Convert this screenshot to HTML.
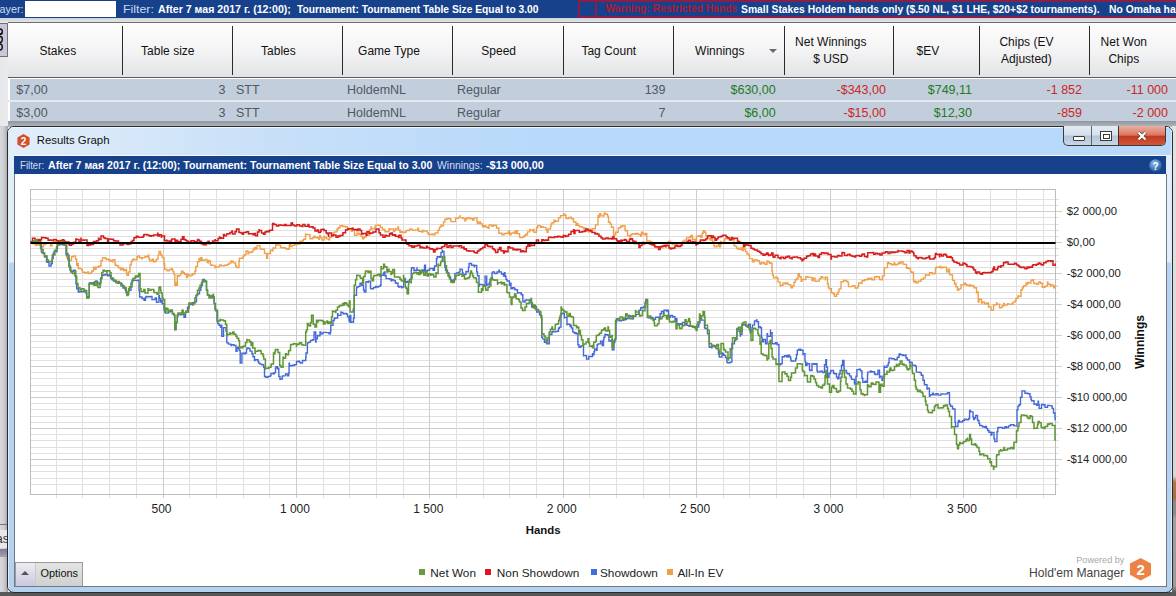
<!DOCTYPE html>
<html><head><meta charset="utf-8">
<style>
*{margin:0;padding:0;box-sizing:border-box}
html,body{width:1176px;height:596px;overflow:hidden;background:#e8eaed;font-family:"Liberation Sans",sans-serif;position:relative}
.a{position:absolute;white-space:nowrap}
.t{line-height:1}
.sep{top:26px;width:2px;height:49px;background:#2a2a2a}
</style></head><body>
<div class="a" style="left:0;top:0;width:1176px;height:17.5px;background:#17428b"></div>
<div class="a" style="left:25px;top:1px;width:91px;height:15.5px;background:#fff"></div>
<div class="a t " style="left:-0.50px;top:3.61px;font-size:10.8px;color:#d0dcf0;">ayer:</div>
<div class="a t " style="left:122.80px;top:3.69px;font-size:10.7px;color:#c8d8f0;transform:scaleX(1.1565);transform-origin:0 0;">Filter:</div>
<div class="a t " style="left:158.30px;top:3.69px;font-size:10.7px;color:#fff;font-weight:bold;transform:scaleX(0.9932);transform-origin:0 0;">After 7 мая 2017 г. (12:00);</div>
<div class="a t " style="left:296.80px;top:3.69px;font-size:10.7px;color:#fff;font-weight:bold;transform:scaleX(0.9592);transform-origin:0 0;">Tournament: Tournament Table Size Equal to 3.00</div>
<div class="a" style="left:578px;top:0;width:600px;height:18px;border:2px solid #8a1e4a"></div>
<div class="a" style="left:578px;top:0;width:18.5px;height:18px;border:2px solid #8a1e4a"></div>
<div class="a t " style="left:605.50px;top:4.48px;font-size:10.3px;color:#b01a32;font-weight:bold;">Warning: Restricted Hands</div>
<div class="a t " style="left:741.00px;top:3.69px;font-size:10.7px;color:#fff;font-weight:bold;transform:scaleX(0.9681);transform-origin:0 0;">Small Stakes Holdem hands only ($.50 NL, $1 LHE, $20+$2 tournaments).</div>
<div class="a t " style="left:1108.50px;top:3.69px;font-size:10.7px;color:#fff;font-weight:bold;transform:scaleX(0.968);transform-origin:0 0;">No Omaha hands</div>
<div class="a" style="left:0;top:17.5px;width:1176px;height:5px;background:linear-gradient(#cfd3d9,#e6e8eb)"></div>
<div class="a" style="left:0;top:22px;width:8px;height:104px;background:linear-gradient(90deg,#e6e8eb,#e9ebee)"></div>
<div class="a" style="left:0;top:126px;width:8px;height:470px;background:linear-gradient(90deg,#d6d8da 0,#cdcdd0 4px,#a29ea8 8px)"></div>
<div class="a" style="left:0;top:524px;width:8px;height:1px;background:#777"></div>
<div class="a" style="left:0;top:549px;width:8px;height:8px;background:linear-gradient(#7d7a90,#a4a2b8)"></div>
<div class="a" style="left:0;top:530px;width:8px;height:18px;background:#e8e8ea"></div>
<div class="a t" style="left:-4px;top:533px;font-size:12px;color:#333">as</div>
<div class="a" style="left:0;top:23px;width:8px;height:34px;background:#c8c6d8;border:1px solid #707078;border-left:none"></div>
<svg class="a" style="left:0;top:22px" width="8" height="36" viewBox="0 0 8 36"><path d="M0,7 Q2.3,7 2.3,9.5 Q2.3,12 0,12 M0,12.5 Q2.3,12.5 2.3,10 M0,14.5 Q2.3,14.5 2.3,17 Q2.3,20.5 0,20.5 M0,22 Q2.3,22 2.3,25 Q2.3,28 0,28" fill="none" stroke="#111" stroke-width="1.4"/></svg>
<div class="a" style="left:8px;top:22px;width:1168px;height:56px;border-top:1px solid #6f6f6f;border-bottom:1px solid #5a5a5a;background:linear-gradient(#fdfdfd 0%,#f4f4f5 50%,#e2e3e6 100%)"></div>
<div class="a sep" style="left:121.5px;width:1.5px"></div>
<div class="a sep" style="left:231.5px;width:1.5px"></div>
<div class="a sep" style="left:341.5px;width:1.5px"></div>
<div class="a sep" style="left:451.5px;width:1.5px"></div>
<div class="a sep" style="left:562.5px;width:1.5px"></div>
<div class="a sep" style="left:672.5px;width:1.5px"></div>
<div class="a sep" style="left:783.5px;width:1.5px"></div>
<div class="a sep" style="left:892.5px;width:1.5px"></div>
<div class="a sep" style="left:978.5px;width:1.5px"></div>
<div class="a sep" style="left:1088.5px;width:1.5px"></div>
<div class="a t " style="left:2.80px;width:110px;text-align:center;top:44.74px;font-size:12px;color:#111;">Stakes</div>
<div class="a t " style="left:112.80px;width:110px;text-align:center;top:44.74px;font-size:12px;color:#111;">Table size</div>
<div class="a t " style="left:223.40px;width:110px;text-align:center;top:44.74px;font-size:12px;color:#111;">Tables</div>
<div class="a t " style="left:334.00px;width:110px;text-align:center;top:44.74px;font-size:12px;color:#111;">Game Type</div>
<div class="a t " style="left:443.70px;width:110px;text-align:center;top:44.74px;font-size:12px;color:#111;">Speed</div>
<div class="a t " style="left:553.80px;width:110px;text-align:center;top:44.74px;font-size:12px;color:#111;">Tag Count</div>
<div class="a t " style="left:664.80px;width:110px;text-align:center;top:44.74px;font-size:12px;color:#111;">Winnings</div>
<div class="a t " style="left:872.90px;width:110px;text-align:center;top:44.74px;font-size:12px;color:#111;">$EV</div>
<div class="a t " style="left:775.80px;width:110px;text-align:center;top:35.54px;font-size:12px;color:#111;">Net Winnings</div>
<div class="a t " style="left:775.80px;width:110px;text-align:center;top:52.54px;font-size:12px;color:#111;">$ USD</div>
<div class="a t " style="left:971.40px;width:110px;text-align:center;top:35.54px;font-size:12px;color:#111;">Chips (EV</div>
<div class="a t " style="left:971.40px;width:110px;text-align:center;top:52.54px;font-size:12px;color:#111;">Adjusted)</div>
<div class="a t " style="left:1068.80px;width:110px;text-align:center;top:35.54px;font-size:12px;color:#111;">Net Won</div>
<div class="a t " style="left:1068.80px;width:110px;text-align:center;top:52.54px;font-size:12px;color:#111;">Chips</div>
<div class="a" style="left:769px;top:48.5px;width:0;height:0;border-left:4px solid transparent;border-right:4px solid transparent;border-top:4px solid #6a6a6a"></div>
<div class="a" style="left:8px;top:78px;width:1168px;height:44px;background:#fff"></div>
<div class="a" style="left:10px;top:78.5px;width:1166px;height:21px;background:#c2cedb"></div>
<div class="a" style="left:10px;top:101.5px;width:1166px;height:20px;background:#c2cedb"></div>
<div class="a" style="left:8px;top:99.5px;width:1168px;height:2px;background:#e4e9ee"></div>
<div class="a" style="left:8px;top:121px;width:1168px;height:5.5px;background:linear-gradient(#8f969e,#b4b9bf)"></div>
<div class="a t " style="left:16.30px;top:84.02px;font-size:12.5px;color:#4f5863;">$7,00</div>
<div class="a t " style="left:125.50px;width:100px;text-align:right;top:84.02px;font-size:12.5px;color:#4f5863;">3</div>
<div class="a t " style="left:236.00px;top:84.02px;font-size:12.5px;color:#4f5863;">STT</div>
<div class="a t " style="left:347.00px;top:84.02px;font-size:12.5px;color:#4f5863;">HoldemNL</div>
<div class="a t " style="left:457.00px;top:84.02px;font-size:12.5px;color:#4f5863;">Regular</div>
<div class="a t " style="left:565.50px;width:100px;text-align:right;top:84.02px;font-size:12.5px;color:#4f5863;">139</div>
<div class="a t " style="left:675.70px;width:100px;text-align:right;top:84.02px;font-size:12.5px;color:#227a22;">$630,00</div>
<div class="a t " style="left:785.90px;width:100px;text-align:right;top:84.02px;font-size:12.5px;color:#cc2626;">-$343,00</div>
<div class="a t " style="left:872.00px;width:100px;text-align:right;top:84.02px;font-size:12.5px;color:#227a22;">$749,11</div>
<div class="a t " style="left:982.00px;width:100px;text-align:right;top:84.02px;font-size:12.5px;color:#cc2626;">-1 852</div>
<div class="a t " style="left:1068.00px;width:100px;text-align:right;top:84.02px;font-size:12.5px;color:#cc2626;">-11 000</div>
<div class="a t " style="left:16.30px;top:106.72px;font-size:12.5px;color:#4f5863;">$3,00</div>
<div class="a t " style="left:125.50px;width:100px;text-align:right;top:106.72px;font-size:12.5px;color:#4f5863;">3</div>
<div class="a t " style="left:236.00px;top:106.72px;font-size:12.5px;color:#4f5863;">STT</div>
<div class="a t " style="left:347.00px;top:106.72px;font-size:12.5px;color:#4f5863;">HoldemNL</div>
<div class="a t " style="left:457.00px;top:106.72px;font-size:12.5px;color:#4f5863;">Regular</div>
<div class="a t " style="left:565.50px;width:100px;text-align:right;top:106.72px;font-size:12.5px;color:#4f5863;">7</div>
<div class="a t " style="left:675.70px;width:100px;text-align:right;top:106.72px;font-size:12.5px;color:#227a22;">$6,00</div>
<div class="a t " style="left:785.90px;width:100px;text-align:right;top:106.72px;font-size:12.5px;color:#cc2626;">-$15,00</div>
<div class="a t " style="left:872.00px;width:100px;text-align:right;top:106.72px;font-size:12.5px;color:#227a22;">$12,30</div>
<div class="a t " style="left:982.00px;width:100px;text-align:right;top:106.72px;font-size:12.5px;color:#cc2626;">-859</div>
<div class="a t " style="left:1068.00px;width:100px;text-align:right;top:106.72px;font-size:12.5px;color:#cc2626;">-2 000</div>
<div class="a" style="left:1172px;top:126px;width:4px;height:470px;background:linear-gradient(#e2e3e5 0px,#d6d7d9 350px,#b07848 356px,#a87040 372px,#8a8a8a 376px,#8a8a8a 388px,#a0a0a0 392px,#9a9a9a 460px,#5a5a5a 466px)"></div>
<div class="a" style="left:0;top:592px;width:1176px;height:4px;background:#585858"></div>
<div class="a" style="left:7px;top:126px;width:1166px;height:467px;border:1px solid #2b2b2b;border-radius:7px 7px 7px 7px;background:linear-gradient(#e4eef9 0,#e4eef9 135px,#b6d4f1 136px,#b4d2f0 100%);overflow:hidden"><div class="a" style="left:0;top:0;width:1164px;height:28px;background:linear-gradient(90deg,#e2eefa 0px,#c9e0f8 250px,#b8d9fa 520px,#b8d9fa 1164px)"></div><div class="a" style="left:0;top:0;width:1164px;height:1px;background:#f2f8ff"></div><div class="a" style="left:0;top:0;width:1px;height:466px;background:#d8ecfa"></div><div class="a" style="right:0;top:0;width:1px;height:466px;background:#d8ecfa"></div></div>
<svg class="a" style="left:16.5px;top:134px" width="13" height="14" viewBox="0 0 13 14"><polygon points="6.5,0 12.6,3.5 12.6,10.5 6.5,14 0.4,10.5 0.4,3.5" fill="#d4502a"/><text x="6.5" y="11" text-anchor="middle" font-family="Liberation Sans" font-weight="bold" font-size="10" fill="#fff">2</text></svg>
<div class="a t " style="left:36.70px;top:135.15px;font-size:11.4px;color:#111;">Results Graph</div>
<div class="a" style="left:1063px;top:126px;width:103px;height:20px;border:1px solid #3a3a3a;border-top:none;border-radius:0 0 5px 5px;overflow:hidden;background:linear-gradient(#e4ebf3 0%,#d6e0ec 48%,#b5c5d8 52%,#c8d6e6 100%)">
  <div class="a" style="left:27px;top:0;width:1px;height:20px;background:#5c6470"></div>
  <div class="a" style="left:54px;top:0;width:48px;height:20px;border-left:1px solid #4a2a2a;background:linear-gradient(#e9b0a2 0%,#dc7660 45%,#c23a20 52%,#d4583e 100%)"></div>
  <div class="a" style="left:9px;top:10px;width:12px;height:5px;border:1px solid #3a3a3a;background:#fff;border-radius:1px"></div>
  <div class="a" style="left:36px;top:5px;width:12px;height:10px;border:1px solid #3a3a3a;background:#fff"></div>
  <div class="a" style="left:38.5px;top:7.5px;width:7px;height:5px;border:1px solid #3a3a3a;background:#fff"></div>
</div>
<svg class="a" style="left:1135px;top:130px" width="14" height="12" viewBox="0 0 14 12"><path d="M3.5,2.5 L10.5,9.5 M10.5,2.5 L3.5,9.5" stroke="#5a3a3a" stroke-width="3.6" stroke-linecap="butt"/><path d="M3.5,2.5 L10.5,9.5 M10.5,2.5 L3.5,9.5" stroke="#fff" stroke-width="2.2" stroke-linecap="butt"/></svg>
<div class="a" style="left:14px;top:154.5px;width:1152px;height:1px;background:#f4f9ff"></div>
<div class="a" style="left:14px;top:155.5px;width:1152px;height:18px;background:#17428b"></div>
<div class="a t " style="left:19.60px;top:159.83px;font-size:10.6px;color:#d2def2;transform:scaleX(0.9100);transform-origin:0 0;">Filter:</div>
<div class="a t " style="left:48.40px;top:159.83px;font-size:10.6px;color:#fff;font-weight:bold;transform:scaleX(0.9978);transform-origin:0 0;">After 7 мая 2017 г. (12:00); Tournament: Tournament Table Size Equal to 3.00</div>
<div class="a t " style="left:436.50px;top:159.83px;font-size:10.6px;color:#d2def2;transform:scaleX(0.9825);transform-origin:0 0;">Winnings:</div>
<div class="a t " style="left:486.30px;top:159.83px;font-size:10.6px;color:#fff;font-weight:bold;transform:scaleX(1.0236);transform-origin:0 0;">-$13 000,00</div>
<svg class="a" style="left:1149px;top:158.5px" width="13" height="13" viewBox="0 0 13 13"><defs><radialGradient id="hg" cx="0.4" cy="0.3" r="0.75"><stop offset="0" stop-color="#8dbbe8"/><stop offset="1" stop-color="#1c569e"/></radialGradient></defs><circle cx="6.5" cy="6.5" r="6.2" fill="url(#hg)"/><text x="6.5" y="10.5" text-anchor="middle" font-family="Liberation Sans" font-weight="bold" font-size="10" fill="#fff">?</text></svg>
<div class="a" style="left:13.5px;top:173.5px;width:1153px;height:413px;background:#fff;border:1px solid #6f7a86;border-top:none"></div>
<svg class="a" style="left:0;top:0" width="1176" height="596" viewBox="0 0 1176 596">
<line x1="30.5" y1="199.5" x2="1059" y2="199.5" stroke="#e0e0e0" stroke-width="1"/>
<line x1="30.5" y1="205.5" x2="1059" y2="205.5" stroke="#e0e0e0" stroke-width="1"/>
<line x1="30.5" y1="211.5" x2="1062" y2="211.5" stroke="#cdcdcd" stroke-width="1"/>
<line x1="30.5" y1="217.5" x2="1059" y2="217.5" stroke="#e0e0e0" stroke-width="1"/>
<line x1="30.5" y1="224.5" x2="1059" y2="224.5" stroke="#e0e0e0" stroke-width="1"/>
<line x1="30.5" y1="230.5" x2="1059" y2="230.5" stroke="#e0e0e0" stroke-width="1"/>
<line x1="30.5" y1="236.5" x2="1059" y2="236.5" stroke="#e0e0e0" stroke-width="1"/>
<line x1="30.5" y1="242.5" x2="1062" y2="242.5" stroke="#cdcdcd" stroke-width="1"/>
<line x1="30.5" y1="248.5" x2="1059" y2="248.5" stroke="#e0e0e0" stroke-width="1"/>
<line x1="30.5" y1="255.5" x2="1059" y2="255.5" stroke="#e0e0e0" stroke-width="1"/>
<line x1="30.5" y1="261.5" x2="1059" y2="261.5" stroke="#e0e0e0" stroke-width="1"/>
<line x1="30.5" y1="267.5" x2="1059" y2="267.5" stroke="#e0e0e0" stroke-width="1"/>
<line x1="30.5" y1="273.5" x2="1062" y2="273.5" stroke="#cdcdcd" stroke-width="1"/>
<line x1="30.5" y1="279.5" x2="1059" y2="279.5" stroke="#e0e0e0" stroke-width="1"/>
<line x1="30.5" y1="286.5" x2="1059" y2="286.5" stroke="#e0e0e0" stroke-width="1"/>
<line x1="30.5" y1="292.5" x2="1059" y2="292.5" stroke="#e0e0e0" stroke-width="1"/>
<line x1="30.5" y1="298.5" x2="1059" y2="298.5" stroke="#e0e0e0" stroke-width="1"/>
<line x1="30.5" y1="304.5" x2="1062" y2="304.5" stroke="#cdcdcd" stroke-width="1"/>
<line x1="30.5" y1="310.5" x2="1059" y2="310.5" stroke="#e0e0e0" stroke-width="1"/>
<line x1="30.5" y1="317.5" x2="1059" y2="317.5" stroke="#e0e0e0" stroke-width="1"/>
<line x1="30.5" y1="323.5" x2="1059" y2="323.5" stroke="#e0e0e0" stroke-width="1"/>
<line x1="30.5" y1="329.5" x2="1059" y2="329.5" stroke="#e0e0e0" stroke-width="1"/>
<line x1="30.5" y1="335.5" x2="1062" y2="335.5" stroke="#cdcdcd" stroke-width="1"/>
<line x1="30.5" y1="341.5" x2="1059" y2="341.5" stroke="#e0e0e0" stroke-width="1"/>
<line x1="30.5" y1="347.5" x2="1059" y2="347.5" stroke="#e0e0e0" stroke-width="1"/>
<line x1="30.5" y1="354.5" x2="1059" y2="354.5" stroke="#e0e0e0" stroke-width="1"/>
<line x1="30.5" y1="360.5" x2="1059" y2="360.5" stroke="#e0e0e0" stroke-width="1"/>
<line x1="30.5" y1="366.5" x2="1062" y2="366.5" stroke="#cdcdcd" stroke-width="1"/>
<line x1="30.5" y1="372.5" x2="1059" y2="372.5" stroke="#e0e0e0" stroke-width="1"/>
<line x1="30.5" y1="378.5" x2="1059" y2="378.5" stroke="#e0e0e0" stroke-width="1"/>
<line x1="30.5" y1="385.5" x2="1059" y2="385.5" stroke="#e0e0e0" stroke-width="1"/>
<line x1="30.5" y1="391.5" x2="1059" y2="391.5" stroke="#e0e0e0" stroke-width="1"/>
<line x1="30.5" y1="397.5" x2="1062" y2="397.5" stroke="#cdcdcd" stroke-width="1"/>
<line x1="30.5" y1="403.5" x2="1059" y2="403.5" stroke="#e0e0e0" stroke-width="1"/>
<line x1="30.5" y1="409.5" x2="1059" y2="409.5" stroke="#e0e0e0" stroke-width="1"/>
<line x1="30.5" y1="416.5" x2="1059" y2="416.5" stroke="#e0e0e0" stroke-width="1"/>
<line x1="30.5" y1="422.5" x2="1059" y2="422.5" stroke="#e0e0e0" stroke-width="1"/>
<line x1="30.5" y1="428.5" x2="1062" y2="428.5" stroke="#cdcdcd" stroke-width="1"/>
<line x1="30.5" y1="434.5" x2="1059" y2="434.5" stroke="#e0e0e0" stroke-width="1"/>
<line x1="30.5" y1="440.5" x2="1059" y2="440.5" stroke="#e0e0e0" stroke-width="1"/>
<line x1="30.5" y1="447.5" x2="1059" y2="447.5" stroke="#e0e0e0" stroke-width="1"/>
<line x1="30.5" y1="453.5" x2="1059" y2="453.5" stroke="#e0e0e0" stroke-width="1"/>
<line x1="30.5" y1="459.5" x2="1062" y2="459.5" stroke="#cdcdcd" stroke-width="1"/>
<line x1="30.5" y1="465.5" x2="1059" y2="465.5" stroke="#e0e0e0" stroke-width="1"/>
<line x1="30.5" y1="471.5" x2="1059" y2="471.5" stroke="#e0e0e0" stroke-width="1"/>
<line x1="30.5" y1="478.5" x2="1059" y2="478.5" stroke="#e0e0e0" stroke-width="1"/>
<line x1="30.5" y1="484.5" x2="1059" y2="484.5" stroke="#e0e0e0" stroke-width="1"/>
<line x1="56.5" y1="189.5" x2="56.5" y2="498" stroke="#e0e0e0" stroke-width="1"/>
<line x1="82.5" y1="189.5" x2="82.5" y2="498" stroke="#e0e0e0" stroke-width="1"/>
<line x1="109.5" y1="189.5" x2="109.5" y2="498" stroke="#e0e0e0" stroke-width="1"/>
<line x1="136.5" y1="189.5" x2="136.5" y2="498" stroke="#e0e0e0" stroke-width="1"/>
<line x1="163.5" y1="189.5" x2="163.5" y2="498" stroke="#cdcdcd" stroke-width="1"/>
<line x1="189.5" y1="189.5" x2="189.5" y2="498" stroke="#e0e0e0" stroke-width="1"/>
<line x1="216.5" y1="189.5" x2="216.5" y2="498" stroke="#e0e0e0" stroke-width="1"/>
<line x1="243.5" y1="189.5" x2="243.5" y2="498" stroke="#e0e0e0" stroke-width="1"/>
<line x1="269.5" y1="189.5" x2="269.5" y2="498" stroke="#e0e0e0" stroke-width="1"/>
<line x1="296.5" y1="189.5" x2="296.5" y2="498" stroke="#cdcdcd" stroke-width="1"/>
<line x1="323.5" y1="189.5" x2="323.5" y2="498" stroke="#e0e0e0" stroke-width="1"/>
<line x1="349.5" y1="189.5" x2="349.5" y2="498" stroke="#e0e0e0" stroke-width="1"/>
<line x1="376.5" y1="189.5" x2="376.5" y2="498" stroke="#e0e0e0" stroke-width="1"/>
<line x1="403.5" y1="189.5" x2="403.5" y2="498" stroke="#e0e0e0" stroke-width="1"/>
<line x1="429.5" y1="189.5" x2="429.5" y2="498" stroke="#cdcdcd" stroke-width="1"/>
<line x1="456.5" y1="189.5" x2="456.5" y2="498" stroke="#e0e0e0" stroke-width="1"/>
<line x1="483.5" y1="189.5" x2="483.5" y2="498" stroke="#e0e0e0" stroke-width="1"/>
<line x1="509.5" y1="189.5" x2="509.5" y2="498" stroke="#e0e0e0" stroke-width="1"/>
<line x1="536.5" y1="189.5" x2="536.5" y2="498" stroke="#e0e0e0" stroke-width="1"/>
<line x1="563.5" y1="189.5" x2="563.5" y2="498" stroke="#cdcdcd" stroke-width="1"/>
<line x1="589.5" y1="189.5" x2="589.5" y2="498" stroke="#e0e0e0" stroke-width="1"/>
<line x1="616.5" y1="189.5" x2="616.5" y2="498" stroke="#e0e0e0" stroke-width="1"/>
<line x1="643.5" y1="189.5" x2="643.5" y2="498" stroke="#e0e0e0" stroke-width="1"/>
<line x1="669.5" y1="189.5" x2="669.5" y2="498" stroke="#e0e0e0" stroke-width="1"/>
<line x1="696.5" y1="189.5" x2="696.5" y2="498" stroke="#cdcdcd" stroke-width="1"/>
<line x1="723.5" y1="189.5" x2="723.5" y2="498" stroke="#e0e0e0" stroke-width="1"/>
<line x1="749.5" y1="189.5" x2="749.5" y2="498" stroke="#e0e0e0" stroke-width="1"/>
<line x1="776.5" y1="189.5" x2="776.5" y2="498" stroke="#e0e0e0" stroke-width="1"/>
<line x1="803.5" y1="189.5" x2="803.5" y2="498" stroke="#e0e0e0" stroke-width="1"/>
<line x1="830.5" y1="189.5" x2="830.5" y2="498" stroke="#cdcdcd" stroke-width="1"/>
<line x1="856.5" y1="189.5" x2="856.5" y2="498" stroke="#e0e0e0" stroke-width="1"/>
<line x1="883.5" y1="189.5" x2="883.5" y2="498" stroke="#e0e0e0" stroke-width="1"/>
<line x1="910.5" y1="189.5" x2="910.5" y2="498" stroke="#e0e0e0" stroke-width="1"/>
<line x1="936.5" y1="189.5" x2="936.5" y2="498" stroke="#e0e0e0" stroke-width="1"/>
<line x1="963.5" y1="189.5" x2="963.5" y2="498" stroke="#cdcdcd" stroke-width="1"/>
<line x1="990.5" y1="189.5" x2="990.5" y2="498" stroke="#e0e0e0" stroke-width="1"/>
<line x1="1016.5" y1="189.5" x2="1016.5" y2="498" stroke="#e0e0e0" stroke-width="1"/>
<line x1="1043.5" y1="189.5" x2="1043.5" y2="498" stroke="#e0e0e0" stroke-width="1"/>
<rect x="30.5" y="189.5" width="1025.0" height="305.0" fill="none" stroke="#bdbdbd" stroke-width="1"/>
<path d="M30.5,242.5 H32.5 V243.9 H35.5 V245.4 H36.4 V245.0 H38.5 V245.0 H40.5 V246.5 H41.4 V246.7 H43.5 V243.8 H44.8 V244.2 H46.0 V243.0 H49.0 V243.1 H50.5 V245.9 H52.0 V242.9 H53.2 V241.7 H53.5 V241.5 H56.5 V241.3 H59.0 V242.2 H60.5 V243.2 H62.5 V240.9 H64.9 V241.7 H65.0 V242.4 H66.6 V256.8 H67.0 V258.1 H69.1 V259.3 H69.5 V260.6 H71.5 V257.4 H71.6 V256.8 H73.3 V255.9 H73.5 V256.0 H75.5 V258.9 H75.8 V259.3 H76.7 V265.2 H77.5 V263.6 H78.3 V268.5 H80.0 V268.6 H81.7 V270.2 H82.5 V272.3 H85.0 V272.7 H85.5 V272.6 H87.5 V272.0 H88.4 V273.6 H90.5 V272.5 H91.8 V271.0 H93.5 V267.3 H95.1 V269.4 H96.0 V267.2 H98.5 V266.8 H99.0 V266.0 H101.0 V260.1 H101.0 V260.9 H102.5 V257.6 H103.5 V257.6 H104.5 V258.0 H106.0 V259.6 H106.9 V259.3 H109.0 V260.7 H110.2 V260.1 H111.0 V261.3 H112.7 V261.8 H113.0 V259.8 H115.0 V263.5 H115.2 V265.2 H117.0 V265.7 H118.5 V267.8 H118.6 V267.7 H120.5 V269.9 H122.0 V268.5 H123.5 V270.5 H125.3 V269.4 H126.5 V273.3 H127.0 V275.2 H128.5 V272.3 H128.7 V271.9 H130.0 V264.9 H131.2 V261.8 H132.0 V260.2 H132.9 V259.3 H134.5 V259.8 H137.0 V256.7 H137.9 V255.9 H139.5 V257.7 H142.0 V259.1 H142.1 V257.6 H145.0 V256.3 H145.4 V256.8 H148.0 V255.1 H148.8 V258.5 H149.5 V260.8 H151.0 V260.5 H152.2 V259.3 H153.5 V261.7 H155.5 V261.0 H156.5 V259.1 H158.0 V255.1 H159.0 V251.4 H160.6 V254.3 H161.0 V255.3 H162.2 V257.6 H164.0 V263.8 H164.7 V269.4 H167.0 V270.8 H168.9 V270.2 H169.5 V269.4 H171.5 V268.7 H172.3 V270.2 H173.0 V271.9 H174.0 V274.4 H174.8 V285.3 H175.5 V282.5 H176.5 V285.3 H177.3 V275.2 H177.5 V276.3 H179.0 V275.4 H180.7 V273.6 H181.5 V271.3 H183.0 V273.3 H184.0 V272.7 H184.5 V274.3 H186.5 V277.5 H187.4 V274.4 H189.0 V275.9 H191.0 V275.2 H192.4 V273.6 H193.5 V274.1 H194.9 V271.0 H195.8 V267.7 H196.0 V266.4 H197.5 V261.8 H199.0 V258.7 H200.5 V260.6 H200.8 V257.6 H202.0 V260.3 H204.2 V260.1 H205.0 V259.4 H207.0 V262.1 H208.0 V262.7 H208.5 V260.5 H209.2 V261.3 H210.5 V265.0 H212.0 V265.4 H215.0 V267.9 H215.3 V267.4 H216.5 V266.9 H219.5 V264.9 H221.3 V265.9 H221.5 V265.8 H224.5 V265.2 H226.0 V265.2 H227.3 V264.4 H229.0 V263.1 H231.0 V261.0 H232.5 V261.7 H233.4 V262.9 H235.5 V265.8 H236.4 V267.4 H237.0 V267.5 H239.0 V261.2 H239.4 V258.3 H241.0 V258.3 H243.0 V256.4 H244.0 V255.3 H244.5 V254.6 H246.0 V251.0 H248.0 V253.8 H248.5 V252.3 H250.0 V252.5 H251.5 V251.8 H253.0 V249.5 H254.5 V247.8 H255.5 V249.0 H257.0 V245.6 H260.0 V248.4 H260.6 V249.3 H261.5 V249.2 H264.5 V253.4 H266.6 V258.3 H267.5 V253.5 H270.5 V250.3 H272.6 V250.8 H273.0 V248.0 H275.7 V244.7 H276.0 V244.7 H278.0 V245.1 H280.5 V247.4 H281.7 V247.8 H283.5 V247.8 H285.5 V248.8 H287.5 V249.2 H289.3 V244.7 H290.5 V246.6 H292.0 V245.4 H294.5 V244.6 H296.8 V243.2 H297.5 V244.0 H300.0 V241.2 H301.5 V241.5 H302.9 V240.2 H303.5 V239.2 H305.5 V234.5 H305.9 V234.2 H307.0 V234.6 H310.0 V238.6 H310.4 V238.7 H312.5 V237.9 H314.0 V236.3 H314.9 V237.2 H316.5 V237.8 H319.0 V239.4 H319.5 V235.7 H320.5 V237.9 H322.0 V240.1 H324.0 V236.4 H324.5 V237.6 H326.1 V237.2 H326.5 V238.9 H328.7 V239.9 H329.5 V237.6 H331.0 V236.6 H332.5 V234.2 H333.4 V232.9 H334.5 V231.9 H337.0 V229.3 H338.1 V228.2 H338.5 V227.7 H340.0 V225.7 H342.5 V226.6 H342.8 V226.3 H345.0 V226.8 H347.5 V228.2 H348.0 V228.9 H349.5 V229.6 H351.5 V231.3 H352.2 V227.7 H353.0 V229.9 H354.5 V235.2 H357.0 V233.3 H359.0 V234.6 H359.2 V234.0 H361.0 V236.4 H362.5 V237.4 H362.7 V238.7 H364.0 V237.0 H366.2 V235.2 H366.5 V235.2 H369.5 V229.8 H370.9 V227.0 H371.5 V228.7 H374.5 V227.1 H375.6 V225.4 H377.5 V225.2 H380.3 V227.0 H380.5 V227.4 H382.5 V229.5 H384.5 V230.0 H385.0 V231.7 H386.5 V231.7 H389.0 V228.6 H389.7 V229.3 H390.5 V228.9 H393.5 V231.4 H394.4 V230.5 H395.5 V228.8 H397.9 V227.0 H398.5 V230.0 H400.0 V232.3 H401.5 V231.7 H402.5 V232.5 H404.5 V232.2 H406.0 V231.4 H406.2 V230.5 H408.0 V230.6 H409.5 V229.3 H410.9 V229.3 H412.5 V230.4 H415.5 V229.9 H417.9 V228.2 H418.5 V231.2 H421.0 V231.5 H422.5 V232.2 H422.6 V230.5 H424.0 V231.0 H425.5 V231.0 H427.3 V232.9 H428.5 V234.5 H431.5 V234.5 H432.0 V234.0 H433.0 V234.8 H435.0 V233.0 H436.7 V232.9 H438.0 V230.3 H439.5 V227.1 H441.0 V224.9 H441.4 V225.8 H443.5 V221.9 H444.9 V220.0 H445.0 V219.3 H447.0 V218.5 H449.0 V218.7 H450.8 V220.7 H451.0 V221.6 H453.0 V221.6 H455.5 V219.2 H455.5 V218.2 H458.5 V217.4 H460.0 V215.8 H460.1 V217.6 H463.0 V218.5 H464.9 V221.1 H465.5 V219.2 H467.0 V217.8 H469.5 V218.8 H470.0 V218.4 H472.0 V218.8 H472.5 V220.1 H474.0 V218.3 H474.5 V217.9 H477.0 V221.5 H477.4 V223.6 H479.0 V221.9 H480.5 V223.6 H482.0 V225.1 H482.7 V226.8 H484.0 V225.7 H485.5 V226.9 H487.0 V227.3 H488.1 V228.2 H489.0 V225.0 H492.0 V226.3 H493.5 V226.8 H493.5 V225.3 H496.5 V228.0 H498.8 V232.2 H499.0 V233.3 H502.0 V234.9 H504.0 V233.7 H504.2 V233.5 H507.0 V233.3 H508.5 V231.1 H509.6 V234.9 H511.0 V233.3 H512.5 V232.9 H514.0 V231.9 H514.9 V233.5 H516.0 V230.6 H517.5 V233.6 H519.5 V237.1 H520.3 V237.6 H522.5 V237.1 H524.0 V235.8 H525.5 V234.3 H525.7 V234.9 H527.5 V231.9 H529.7 V229.5 H530.0 V230.0 H532.5 V230.8 H533.7 V229.5 H534.0 V232.3 H536.5 V227.8 H537.7 V225.5 H538.0 V225.6 H540.5 V227.3 H541.8 V226.8 H543.0 V227.4 H546.0 V229.6 H547.1 V232.2 H548.0 V229.0 H550.5 V226.4 H551.1 V224.1 H552.0 V222.7 H554.0 V220.3 H555.2 V221.5 H556.5 V221.1 H558.5 V217.7 H560.5 V216.7 H560.5 V215.6 H563.5 V214.3 H565.0 V215.2 H565.9 V218.2 H566.5 V218.5 H569.0 V217.4 H571.0 V217.3 H571.3 V218.8 H573.5 V222.0 H576.0 V225.2 H576.6 V223.6 H578.0 V225.6 H579.5 V226.7 H580.7 V226.8 H582.5 V227.6 H584.0 V229.5 H584.7 V228.2 H586.0 V231.1 H588.0 V231.7 H590.1 V229.5 H591.0 V229.1 H592.5 V228.8 H595.4 V225.5 H595.5 V224.9 H598.0 V215.8 H598.1 V217.4 H599.5 V213.6 H601.0 V215.9 H603.5 V216.1 H604.0 V213.2 H605.5 V214.2 H607.5 V216.1 H608.5 V222.3 H610.2 V224.1 H611.5 V227.3 H613.5 V236.3 H614.2 V234.9 H615.5 V232.2 H618.2 V228.2 H618.5 V227.9 H620.0 V228.0 H620.5 V226.3 H622.0 V226.8 H622.5 V225.8 H625.0 V229.7 H625.4 V230.7 H627.5 V235.6 H629.5 V236.7 H630.7 V234.8 H632.0 V233.7 H635.0 V234.4 H636.1 V233.4 H638.0 V234.5 H640.5 V236.2 H641.5 V232.1 H643.0 V234.0 H644.5 V234.7 H645.5 V233.4 H646.8 V241.5 H647.0 V240.9 H649.0 V241.2 H650.9 V244.1 H651.0 V242.1 H652.5 V245.2 H655.5 V247.1 H657.0 V247.5 H657.6 V246.8 H659.5 V247.0 H661.0 V247.8 H662.9 V246.8 H663.0 V245.9 H666.0 V243.7 H668.3 V241.5 H668.5 V241.4 H670.5 V243.5 H672.5 V244.4 H673.7 V242.8 H675.5 V245.0 H677.0 V246.1 H679.0 V245.5 H680.0 V245.5 H682.5 V241.1 H684.0 V241.4 H684.4 V240.1 H686.5 V237.9 H689.5 V236.8 H689.8 V237.4 H691.0 V235.5 H692.5 V239.2 H695.0 V240.8 H695.1 V240.1 H696.5 V236.3 H699.0 V235.7 H700.5 V237.4 H702.0 V233.4 H703.2 V230.7 H704.5 V232.3 H705.9 V236.1 H707.5 V238.1 H710.0 V240.1 H711.2 V238.8 H712.5 V241.6 H713.9 V245.5 H714.5 V246.9 H716.5 V246.0 H718.5 V244.4 H719.3 V246.8 H720.6 V241.5 H721.0 V242.8 H724.0 V241.1 H724.6 V238.8 H727.0 V238.5 H730.0 V238.8 H730.0 V240.2 H732.0 V239.4 H734.0 V245.5 H735.0 V246.1 H736.5 V248.5 H738.1 V248.2 H738.5 V249.3 H740.5 V248.0 H742.0 V250.6 H743.4 V246.8 H744.0 V249.4 H745.5 V251.6 H747.0 V254.0 H748.8 V254.9 H749.5 V258.6 H752.5 V261.7 H754.2 V260.2 H754.5 V259.7 H757.0 V260.7 H759.5 V262.9 H760.0 V264.0 H761.5 V262.7 H764.0 V263.3 H764.9 V264.3 H767.0 V261.0 H768.0 V261.7 H769.5 V263.2 H770.0 V262.9 H771.0 V263.2 H772.0 V270.7 H772.5 V275.3 H773.5 V277.8 H776.0 V277.3 H777.1 V278.3 H778.0 V282.1 H780.1 V285.9 H780.5 V285.2 H783.0 V282.9 H785.0 V284.0 H786.1 V282.9 H788.0 V284.6 H790.6 V285.9 H791.0 V287.9 H792.5 V285.9 H794.0 V282.3 H795.2 V279.8 H796.5 V278.8 H798.0 V273.6 H798.2 V273.8 H799.5 V276.7 H801.2 V281.3 H802.0 V279.5 H805.0 V279.5 H805.8 V276.8 H808.0 V277.4 H810.5 V277.4 H812.0 V280.5 H813.3 V278.3 H815.0 V281.3 H817.5 V281.1 H819.3 V279.8 H819.5 V278.6 H821.0 V276.8 H822.5 V277.9 H825.4 V279.8 H825.5 V277.1 H827.5 V284.0 H828.4 V287.4 H829.0 V288.8 H831.4 V291.9 H831.5 V292.7 H833.5 V294.0 H834.5 V296.4 H836.5 V294.2 H838.0 V291.9 H839.0 V288.9 H841.0 V281.8 H843.5 V279.8 H843.5 V280.5 H846.5 V281.5 H848.0 V282.9 H848.5 V286.6 H851.5 V286.4 H852.6 V285.9 H853.5 V285.6 H855.0 V288.0 H858.0 V286.2 H858.6 V282.9 H860.5 V283.2 H862.0 V280.8 H864.5 V280.6 H864.6 V279.8 H867.5 V278.4 H869.0 V279.2 H870.7 V278.3 H872.0 V279.7 H874.5 V277.0 H876.5 V276.4 H876.7 V276.8 H879.5 V279.5 H881.3 V279.8 H882.5 V275.9 H884.3 V269.3 H884.5 V267.6 H887.5 V262.7 H888.8 V263.2 H889.5 V263.7 H891.5 V264.8 H894.0 V262.9 H894.9 V264.7 H897.0 V264.1 H898.5 V262.8 H900.0 V263.6 H900.9 V261.7 H903.0 V264.1 H904.5 V264.4 H906.5 V268.2 H906.9 V267.8 H908.5 V268.5 H910.5 V271.7 H911.5 V272.3 H913.5 V280.7 H914.0 V282.0 H915.5 V281.3 H916.0 V282.9 H916.9 V282.8 H918.1 V281.3 H918.5 V281.3 H921.0 V279.5 H921.1 V279.2 H923.5 V277.9 H925.4 V274.9 H926.5 V275.3 H929.5 V273.1 H929.7 V272.8 H932.5 V273.8 H934.0 V273.5 H935.5 V268.1 H936.1 V267.1 H937.0 V267.3 H939.0 V267.4 H939.7 V266.4 H940.5 V267.8 H942.0 V267.1 H943.5 V267.6 H943.9 V267.1 H946.5 V271.7 H948.2 V269.2 H949.5 V274.5 H950.4 V274.9 H952.5 V279.2 H952.5 V280.4 H954.5 V284.1 H955.4 V283.5 H956.0 V286.8 H957.5 V290.4 H958.2 V289.9 H959.0 V288.9 H961.0 V284.1 H961.0 V284.9 H964.0 V283.1 H965.3 V284.2 H966.5 V285.2 H969.0 V286.0 H969.6 V284.9 H971.0 V285.8 H973.9 V287.8 H974.0 V287.8 H976.5 V292.7 H976.7 V292.0 H978.2 V302.0 H979.0 V299.3 H981.5 V303.1 H982.4 V302.0 H984.5 V303.8 H986.7 V303.4 H987.0 V302.9 H988.5 V307.0 H991.0 V309.9 H991.5 V310.4 H993.5 V305.9 H993.8 V304.9 H996.5 V302.7 H996.7 V304.1 H998.0 V304.3 H999.5 V307.7 H1000.5 V307.7 H1002.0 V306.0 H1003.8 V303.4 H1004.5 V305.1 H1007.5 V303.6 H1008.1 V304.1 H1010.5 V304.3 H1012.4 V303.4 H1013.0 V302.1 H1015.2 V300.6 H1016.0 V298.2 H1018.0 V295.6 H1018.1 V296.3 H1021.0 V289.7 H1022.4 V287.8 H1023.5 V285.8 H1026.0 V283.2 H1026.6 V284.2 H1027.5 V282.4 H1029.0 V283.1 H1030.9 V280.6 H1032.0 V279.6 H1033.5 V282.9 H1033.8 V283.5 H1036.5 V283.4 H1036.6 V284.2 H1038.5 V282.3 H1039.5 V282.0 H1040.5 V283.2 H1042.3 V287.0 H1043.0 V287.2 H1044.5 V287.0 H1045.2 V286.3 H1046.0 V286.1 H1047.5 V281.9 H1048.0 V284.2 H1050.5 V286.0 H1050.9 V284.9 H1053.0 V285.9 H1053.7 V287.8 H1054.5 V286.0 H1055.9 V286.3" fill="none" stroke="#f0a04a" stroke-width="1.4" stroke-linejoin="miter"/>
<path d="M30.5,241.5 H32.5 V238.2 H35.0 V240.2 H38.0 V239.5 H39.5 V240.9 H40.6 V239.8 H41.5 V237.4 H43.5 V237.8 H46.0 V238.3 H48.1 V240.3 H49.0 V240.1 H51.0 V240.3 H53.5 V239.6 H55.7 V239.8 H56.5 V240.7 H58.0 V241.0 H60.5 V240.4 H62.5 V239.7 H63.2 V240.3 H64.5 V242.0 H66.0 V242.0 H69.0 V244.6 H69.5 V245.3 H71.5 V244.3 H72.0 V244.0 H73.5 V242.2 H75.8 V239.0 H76.5 V239.6 H79.0 V241.7 H80.9 V238.3 H81.0 V240.0 H83.4 V240.3 H84.0 V240.0 H87.0 V245.4 H88.4 V244.0 H89.0 V245.0 H90.5 V244.4 H93.4 V242.8 H93.5 V241.5 H96.5 V240.8 H98.5 V238.3 H99.0 V239.6 H101.0 V236.0 H102.5 V235.9 H103.5 V237.8 H105.0 V238.5 H107.5 V241.3 H108.5 V239.0 H110.5 V239.2 H113.5 V240.2 H113.6 V240.8 H115.5 V241.1 H118.5 V243.2 H118.6 V242.8 H120.0 V245.1 H123.0 V244.0 H123.7 V242.8 H126.0 V243.7 H127.5 V244.4 H128.7 V244.0 H130.5 V243.4 H131.2 V241.5 H132.5 V240.6 H134.0 V237.8 H136.2 V236.5 H136.5 V236.2 H138.0 V237.2 H140.5 V237.2 H143.0 V236.4 H143.8 V234.7 H144.5 V234.5 H147.0 V235.0 H149.0 V235.7 H150.5 V236.2 H151.3 V235.7 H153.5 V235.1 H155.5 V235.1 H157.6 V233.2 H158.0 V236.0 H159.5 V234.8 H161.4 V237.3 H161.5 V236.0 H164.5 V240.7 H166.4 V240.3 H167.0 V241.1 H170.0 V242.5 H171.5 V239.8 H172.0 V239.0 H175.0 V242.6 H176.0 V240.2 H177.5 V242.3 H178.0 V241.5 H179.5 V241.9 H181.0 V239.2 H182.0 V239.3 H182.5 V236.7 H184.0 V239.6 H185.5 V240.3 H186.6 V241.1 H188.0 V242.0 H191.0 V240.8 H192.5 V240.8 H194.1 V241.7 H195.5 V241.4 H197.5 V239.6 H198.7 V240.2 H199.5 V241.3 H201.5 V243.8 H203.2 V244.7 H204.5 V244.8 H206.5 V242.5 H208.0 V241.2 H209.2 V243.8 H210.0 V243.2 H212.5 V241.0 H215.0 V239.7 H215.3 V240.8 H218.0 V238.6 H219.5 V236.9 H219.8 V237.8 H221.0 V238.3 H223.5 V234.6 H224.3 V235.7 H226.5 V233.9 H228.0 V233.8 H230.0 V232.4 H231.9 V231.1 H232.5 V234.1 H235.0 V231.5 H236.4 V231.7 H236.5 V228.9 H239.0 V232.6 H241.0 V233.0 H242.4 V234.2 H243.5 V232.6 H246.5 V231.8 H248.5 V234.8 H248.5 V233.7 H251.5 V233.7 H253.0 V234.8 H254.5 V233.6 H255.5 V235.8 H257.5 V231.9 H259.0 V229.7 H259.1 V230.5 H261.5 V233.0 H263.5 V234.3 H263.6 V234.2 H265.0 V232.1 H266.5 V231.3 H268.1 V231.7 H269.5 V230.3 H272.5 V224.4 H272.6 V223.6 H274.0 V224.4 H276.5 V226.1 H278.5 V226.0 H278.7 V225.1 H281.0 V225.2 H284.0 V225.5 H284.7 V224.5 H286.0 V225.6 H288.5 V225.6 H291.0 V223.3 H292.3 V222.7 H292.5 V225.1 H294.5 V225.9 H296.8 V225.1 H297.0 V224.8 H299.5 V225.9 H302.0 V226.5 H302.9 V224.5 H305.0 V226.2 H308.0 V224.5 H308.9 V226.6 H309.5 V227.1 H311.5 V226.7 H313.0 V228.0 H314.9 V228.7 H315.0 V231.0 H317.0 V229.9 H318.5 V232.6 H320.5 V231.3 H321.0 V229.6 H323.0 V229.2 H324.0 V230.5 H324.5 V230.5 H326.1 V232.7 H327.0 V233.7 H328.5 V236.2 H328.7 V232.9 H331.5 V235.8 H333.4 V235.2 H333.5 V235.1 H336.0 V237.2 H338.0 V235.8 H338.1 V236.4 H340.0 V235.5 H342.8 V234.0 H343.0 V232.8 H345.5 V229.9 H347.5 V229.3 H348.0 V228.8 H350.5 V228.7 H352.2 V228.6 H353.0 V229.7 H355.0 V229.5 H356.9 V230.5 H358.0 V229.0 H360.0 V230.6 H361.6 V234.0 H363.0 V233.6 H365.5 V233.2 H366.2 V235.2 H367.0 V231.8 H369.0 V233.6 H370.5 V233.2 H370.9 V232.9 H373.0 V232.0 H375.6 V231.7 H376.0 V229.0 H379.0 V232.7 H380.3 V234.0 H380.5 V234.9 H383.0 V237.2 H385.0 V237.0 H385.0 V235.2 H386.5 V235.9 H389.5 V233.8 H389.7 V234.0 H391.0 V233.1 H392.5 V235.2 H394.4 V234.7 H395.5 V236.3 H398.5 V237.6 H399.1 V235.2 H401.0 V238.0 H402.0 V240.0 H403.0 V240.0 H406.0 V243.2 H407.1 V244.2 H407.5 V244.2 H409.0 V245.8 H411.5 V247.1 H412.1 V245.9 H413.0 V247.3 H414.5 V246.0 H417.1 V245.9 H417.5 V245.3 H420.0 V247.8 H421.5 V247.0 H422.1 V247.6 H423.5 V247.9 H426.5 V246.3 H427.2 V247.6 H429.5 V249.0 H431.0 V248.7 H432.2 V249.2 H433.5 V252.0 H435.0 V249.5 H437.0 V248.3 H437.2 V248.4 H439.5 V248.5 H441.5 V247.3 H442.3 V246.7 H443.0 V246.5 H444.8 V244.2 H445.0 V244.4 H447.0 V247.2 H449.0 V245.0 H449.0 V245.4 H451.0 V247.6 H453.0 V245.9 H454.0 V245.9 H456.0 V245.9 H458.0 V245.9 H459.1 V246.7 H459.5 V245.8 H461.5 V247.8 H463.5 V247.1 H464.1 V249.2 H465.0 V248.7 H466.5 V250.8 H469.0 V251.2 H469.1 V250.9 H471.0 V251.0 H474.0 V251.9 H474.2 V252.6 H476.0 V252.9 H477.5 V250.9 H479.0 V249.9 H480.5 V248.7 H482.6 V247.6 H483.5 V247.2 H485.0 V244.7 H487.5 V246.2 H489.3 V246.7 H490.5 V246.6 H492.5 V248.7 H494.0 V249.5 H494.3 V250.1 H495.5 V252.5 H497.6 V251.7 H498.0 V249.5 H499.5 V247.5 H501.0 V250.8 H503.5 V253.0 H504.4 V250.9 H506.0 V251.7 H508.0 V246.7 H509.4 V247.6 H510.0 V248.1 H513.0 V249.8 H514.4 V249.2 H516.0 V250.1 H517.8 V249.2 H518.0 V249.6 H520.5 V251.7 H522.0 V250.7 H522.8 V250.9 H524.0 V251.8 H526.2 V248.4 H526.5 V246.4 H527.9 V244.2 H529.5 V246.2 H530.0 V245.0 H531.5 V245.5 H534.5 V243.3 H536.4 V240.2 H536.5 V239.9 H538.5 V242.9 H541.5 V241.5 H541.8 V239.7 H543.5 V240.5 H545.5 V240.0 H547.1 V240.2 H548.5 V237.3 H551.5 V237.6 H552.5 V237.6 H554.5 V236.7 H556.5 V236.9 H557.9 V236.2 H559.0 V236.5 H560.5 V236.9 H562.5 V237.3 H563.2 V235.4 H565.0 V236.5 H566.5 V236.1 H568.5 V235.4 H568.6 V234.3 H571.0 V231.4 H573.5 V229.8 H574.0 V233.5 H575.0 V230.5 H578.0 V230.6 H579.3 V232.2 H580.0 V231.9 H582.5 V231.6 H585.0 V230.7 H586.0 V229.0 H588.0 V230.2 H590.1 V230.9 H590.5 V230.7 H592.0 V232.4 H595.0 V234.1 H595.4 V233.5 H597.5 V234.2 H599.0 V236.3 H600.8 V236.2 H601.0 V237.8 H602.5 V238.9 H605.0 V238.4 H606.2 V238.1 H608.0 V238.7 H609.5 V238.6 H611.5 V238.9 H612.5 V236.9 H614.0 V238.7 H616.5 V239.7 H616.9 V240.8 H618.0 V241.2 H620.0 V240.1 H620.0 V240.3 H621.5 V241.4 H622.0 V240.2 H624.5 V239.5 H625.4 V240.1 H626.5 V241.4 H629.5 V239.2 H630.7 V238.8 H632.5 V241.0 H634.0 V243.5 H634.8 V241.5 H636.0 V243.4 H639.0 V247.6 H640.1 V245.5 H642.0 V242.6 H644.1 V244.1 H644.5 V243.2 H647.0 V242.7 H649.0 V243.3 H649.5 V244.1 H651.5 V244.8 H654.5 V246.5 H654.9 V246.8 H656.5 V246.8 H658.5 V249.5 H660.2 V246.8 H661.5 V246.2 H664.0 V245.5 H665.6 V246.8 H666.0 V245.6 H669.0 V248.0 H670.5 V249.0 H671.0 V248.2 H672.0 V248.4 H673.5 V247.9 H675.0 V246.0 H676.4 V245.5 H678.0 V246.4 H680.5 V245.4 H681.7 V242.8 H683.5 V243.1 H686.0 V242.6 H687.1 V241.5 H688.5 V240.3 H690.5 V243.3 H692.4 V241.5 H693.0 V241.9 H696.0 V245.1 H696.5 V244.1 H698.0 V242.6 H700.0 V241.6 H700.5 V240.1 H703.0 V240.4 H704.5 V240.1 H705.9 V238.8 H707.5 V236.0 H709.0 V235.7 H711.2 V237.4 H712.0 V236.1 H713.5 V237.5 H715.0 V240.2 H716.6 V238.8 H718.0 V237.0 H720.5 V236.4 H722.0 V236.1 H723.0 V235.3 H726.0 V236.8 H727.3 V237.4 H728.0 V238.1 H729.5 V239.7 H731.5 V237.4 H732.7 V238.8 H734.5 V238.2 H737.5 V241.1 H738.1 V241.5 H739.5 V242.5 H741.0 V243.3 H743.4 V244.1 H743.5 V246.5 H745.0 V244.5 H746.5 V245.0 H748.5 V245.3 H748.8 V245.5 H751.0 V248.3 H753.0 V249.0 H754.2 V249.5 H755.0 V250.1 H757.5 V251.3 H759.5 V252.2 H761.0 V253.7 H763.0 V255.2 H764.9 V254.3 H765.0 V254.5 H766.5 V252.9 H768.0 V254.2 H768.5 V255.4 H770.0 V254.9 H771.5 V253.1 H773.0 V257.0 H774.0 V257.2 H775.0 V255.3 H778.0 V257.8 H780.1 V258.7 H781.0 V257.3 H783.5 V258.5 H785.5 V256.9 H786.1 V257.2 H787.5 V256.2 H789.5 V258.0 H791.5 V258.8 H792.2 V257.2 H794.5 V256.9 H797.5 V257.7 H798.2 V257.8 H800.5 V258.9 H802.0 V260.7 H802.7 V259.6 H804.0 V258.3 H806.5 V256.3 H807.3 V256.6 H808.0 V255.7 H810.5 V254.0 H812.5 V253.5 H813.3 V255.7 H814.0 V254.0 H815.5 V255.9 H818.0 V257.5 H819.3 V257.2 H819.5 V254.3 H821.5 V252.8 H824.0 V253.5 H825.4 V253.6 H826.0 V252.9 H828.0 V254.4 H831.0 V259.0 H831.4 V256.6 H833.0 V256.4 H835.0 V257.1 H837.5 V255.7 H837.5 V255.5 H839.5 V255.9 H842.0 V252.4 H843.5 V252.7 H844.5 V255.5 H847.5 V254.5 H849.5 V254.2 H850.0 V255.4 H852.0 V256.3 H854.5 V256.9 H855.6 V255.7 H857.0 V255.6 H859.5 V256.2 H861.6 V254.8 H862.5 V254.0 H864.5 V256.6 H866.5 V256.9 H867.7 V252.7 H868.0 V252.8 H871.0 V252.8 H872.5 V252.6 H873.7 V254.2 H875.5 V253.3 H877.5 V254.1 H879.8 V253.6 H880.0 V254.9 H882.0 V252.9 H885.0 V252.3 H885.8 V251.7 H888.0 V253.4 H890.0 V252.1 H891.8 V252.7 H892.0 V252.1 H893.5 V252.6 H895.0 V251.9 H897.9 V250.5 H898.0 V251.0 H901.0 V251.0 H902.5 V251.6 H903.9 V251.7 H905.0 V252.7 H907.0 V250.6 H909.0 V252.9 H910.0 V251.1 H912.0 V252.0 H913.5 V253.5 H914.0 V255.7 H914.5 V255.7 H916.0 V257.5 H917.5 V258.6 H918.1 V258.7 H918.4 V257.8 H919.5 V257.4 H921.5 V257.9 H922.5 V258.5 H924.0 V258.7 H925.5 V257.9 H926.8 V257.8 H927.5 V257.5 H929.0 V256.0 H929.7 V259.0 H932.0 V259.0 H934.0 V258.5 H934.5 V257.5 H935.4 V253.5 H936.5 V254.6 H939.5 V256.8 H939.7 V254.2 H941.5 V256.0 H943.5 V254.7 H943.9 V254.2 H946.0 V255.6 H946.8 V257.1 H948.0 V257.2 H949.5 V256.7 H951.1 V257.8 H952.5 V260.6 H953.9 V262.1 H955.5 V262.2 H956.8 V262.8 H957.5 V263.3 H959.6 V264.9 H960.0 V265.1 H963.0 V263.1 H963.9 V263.5 H965.5 V264.5 H966.8 V264.9 H967.0 V266.4 H970.0 V266.6 H971.0 V267.1 H973.0 V268.4 H973.9 V269.9 H975.5 V272.7 H976.7 V273.5 H977.0 V272.1 H979.5 V273.6 H981.0 V274.2 H982.5 V272.8 H984.0 V272.6 H985.3 V272.8 H985.5 V272.7 H988.0 V272.5 H989.6 V272.8 H990.5 V272.6 H991.7 V271.4 H993.0 V268.7 H993.8 V267.1 H994.5 V269.8 H996.0 V269.7 H997.5 V268.0 H998.1 V266.4 H1000.5 V267.3 H1001.0 V265.7 H1003.5 V262.6 H1004.5 V262.8 H1006.0 V262.1 H1008.0 V262.4 H1008.1 V264.2 H1010.5 V264.3 H1012.4 V264.2 H1012.5 V264.3 H1014.5 V263.2 H1016.5 V263.9 H1016.6 V264.9 H1018.5 V265.9 H1019.5 V267.1 H1021.0 V267.6 H1023.5 V267.1 H1023.8 V267.5 H1025.0 V268.8 H1027.0 V267.1 H1028.1 V267.8 H1029.5 V267.0 H1031.0 V267.2 H1032.3 V265.7 H1033.0 V264.8 H1036.0 V265.2 H1036.6 V264.2 H1038.5 V263.1 H1039.5 V263.5 H1041.0 V264.7 H1042.3 V264.9 H1043.5 V262.8 H1045.2 V262.8 H1046.0 V261.6 H1048.0 V260.7 H1050.9 V261.4 H1051.0 V260.8 H1053.0 V264.2 H1053.0 V265.3 H1055.2 V263.5" fill="none" stroke="#d61c1c" stroke-width="1.5" stroke-linejoin="miter"/>
<path d="M30.5,242.5 H32.5 V242.6 H34.7 V241.7 H35.0 V241.6 H37.0 V243.6 H39.0 V242.6 H39.7 V243.4 H41.4 V251.7 H42.0 V252.9 H44.5 V257.0 H44.8 V255.9 H46.5 V261.8 H47.5 V262.4 H49.0 V263.5 H49.0 V266.0 H51.0 V264.0 H51.5 V263.5 H52.3 V258.5 H53.2 V253.4 H54.0 V251.4 H56.5 V251.7 H57.0 V248.3 H57.4 V244.2 H59.0 V244.0 H61.0 V244.3 H62.5 V244.8 H64.0 V244.8 H64.1 V245.0 H66.0 V254.6 H66.6 V255.1 H69.0 V266.4 H69.1 V266.8 H70.0 V270.2 H71.0 V271.5 H73.0 V271.2 H73.3 V270.2 H75.0 V276.1 H76.0 V284.1 H76.7 V288.7 H78.3 V292.0 H79.0 V291.7 H82.0 V291.7 H83.5 V291.1 H85.0 V292.0 H85.5 V290.8 H86.7 V297.0 H87.0 V296.8 H88.4 V297.0 H89.2 V283.6 H89.5 V283.0 H92.5 V283.1 H93.4 V284.5 H94.5 V281.6 H96.0 V281.1 H97.5 V282.9 H99.3 V284.5 H100.5 V278.8 H101.8 V275.2 H103.5 V275.0 H105.5 V274.5 H106.9 V274.4 H107.5 V275.7 H109.4 V274.4 H110.0 V275.8 H111.0 V278.6 H112.0 V279.9 H113.5 V280.9 H113.6 V281.1 H115.5 V282.1 H118.0 V283.3 H121.0 V283.8 H122.0 V285.3 H123.0 V288.0 H125.3 V290.3 H126.0 V292.3 H127.0 V294.5 H128.5 V291.5 H128.7 V290.3 H131.0 V283.1 H132.0 V280.3 H134.0 V280.4 H137.0 V280.6 H137.9 V280.3 H139.0 V290.6 H139.6 V297.0 H142.0 V298.5 H144.0 V300.2 H145.4 V297.9 H146.0 V296.5 H148.0 V296.8 H150.5 V296.4 H152.0 V299.6 H155.0 V298.4 H155.5 V297.9 H156.5 V302.2 H157.2 V302.1 H158.9 V295.4 H159.5 V298.8 H160.6 V302.1 H161.5 V300.4 H162.2 V303.8 H164.0 V309.7 H164.7 V312.1 H165.5 V313.1 H168.5 V311.0 H171.0 V311.3 H172.3 V313.8 H174.0 V315.5 H174.0 V315.2 H174.8 V329.8 H176.0 V322.6 H177.3 V316.3 H178.0 V314.5 H180.5 V314.0 H183.5 V314.4 H184.0 V317.2 H185.5 V312.4 H185.7 V312.1 H187.5 V307.3 H189.1 V303.8 H189.5 V304.6 H192.5 V302.7 H194.1 V302.9 H194.5 V301.9 H196.5 V294.9 H197.5 V293.7 H199.5 V290.3 H200.8 V287.0 H201.5 V285.0 H202.5 V280.3 H203.0 V279.5 H204.5 V280.6 H205.0 V281.7 H206.5 V290.0 H207.5 V295.1 H209.5 V296.0 H212.0 V297.7 H213.4 V296.8 H214.0 V301.3 H214.2 V303.5 H215.5 V310.9 H217.0 V320.8 H217.6 V323.6 H219.0 V325.3 H220.5 V327.4 H220.9 V325.3 H221.8 V336.2 H223.5 V328.7 H223.5 V327.6 H226.0 V330.3 H226.0 V331.1 H226.8 V342.9 H228.5 V344.1 H231.0 V345.5 H231.8 V344.6 H234.0 V345.6 H234.4 V345.4 H236.0 V351.3 H237.0 V348.3 H237.7 V347.1 H239.0 V349.9 H239.4 V350.5 H240.2 V363.1 H241.9 V353.8 H242.0 V353.1 H244.0 V353.9 H245.3 V353.0 H246.5 V349.4 H246.9 V348.0 H248.5 V348.4 H249.5 V348.8 H250.0 V351.1 H252.0 V353.8 H253.0 V356.8 H254.5 V360.5 H255.0 V359.7 H258.0 V361.5 H258.7 V363.1 H260.0 V364.1 H262.0 V364.6 H262.1 V364.7 H263.7 V367.2 H264.5 V376.4 H264.6 V376.5 H266.0 V377.3 H268.0 V376.4 H270.4 V375.6 H271.0 V373.5 H273.8 V374.0 H274.0 V372.7 H275.5 V368.1 H276.0 V366.8 H277.5 V368.8 H278.0 V368.1 H278.8 V376.5 H280.0 V379.3 H280.5 V379.0 H282.2 V376.5 H282.5 V375.9 H285.5 V376.3 H285.5 V374.0 H287.5 V375.9 H288.7 V373.1 H289.1 V363.1 H289.5 V365.8 H292.5 V365.2 H294.5 V364.6 H296.5 V361.5 H298.0 V361.3 H299.5 V362.4 H300.6 V363.1 H302.5 V360.5 H304.0 V360.5 H304.0 V360.5 H305.7 V357.2 H306.0 V353.0 H307.4 V342.9 H308.5 V342.4 H309.9 V342.1 H310.5 V340.4 H312.4 V339.6 H312.5 V339.9 H314.0 V334.9 H314.1 V332.0 H315.7 V342.1 H316.0 V338.8 H317.4 V335.4 H318.0 V335.7 H320.0 V331.9 H320.8 V333.7 H323.0 V332.4 H326.0 V332.6 H329.0 V333.9 H330.0 V333.7 H330.5 V331.0 H330.8 V325.3 H333.0 V320.5 H334.2 V318.6 H335.0 V318.0 H337.6 V313.6 H338.0 V315.4 H340.9 V311.9 H341.0 V312.4 H343.0 V313.7 H344.3 V313.6 H345.0 V313.4 H346.5 V314.2 H347.6 V316.9 H349.0 V320.0 H349.3 V321.9 H350.0 V315.5 H350.8 V322.2 H351.5 V321.9 H353.4 V322.2 H353.5 V318.2 H354.2 V295.4 H356.5 V288.1 H356.7 V287.0 H358.5 V286.4 H360.0 V283.2 H361.5 V284.5 H361.7 V285.3 H363.5 V289.9 H364.3 V292.0 H365.9 V281.9 H366.5 V281.6 H368.0 V282.3 H368.5 V281.1 H370.5 V288.4 H371.0 V288.7 H373.5 V287.0 H373.5 V287.6 H375.5 V286.5 H376.9 V287.0 H378.5 V286.4 H380.2 V285.3 H381.0 V273.3 H381.0 V275.2 H383.5 V273.0 H384.4 V271.9 H385.0 V275.7 H386.1 V278.6 H387.0 V278.6 H389.5 V279.0 H391.0 V280.7 H391.9 V279.4 H392.5 V279.9 H394.0 V280.6 H395.3 V282.8 H396.0 V283.2 H398.0 V286.4 H398.7 V287.0 H399.5 V286.5 H401.5 V287.7 H402.0 V287.0 H403.7 V280.3 H404.5 V281.7 H406.5 V282.2 H407.9 V281.1 H409.5 V280.9 H409.6 V279.4 H411.2 V270.2 H411.5 V267.8 H414.0 V270.2 H417.0 V268.0 H417.1 V270.2 H419.5 V271.2 H422.0 V270.0 H423.0 V271.0 H424.5 V266.4 H424.7 V265.2 H425.5 V271.0 H427.5 V270.3 H429.5 V268.5 H431.5 V268.5 H433.1 V270.2 H434.5 V266.4 H434.7 V266.0 H436.5 V258.8 H437.2 V256.8 H439.5 V257.2 H440.6 V256.8 H441.0 V252.4 H442.3 V250.1 H442.5 V251.4 H444.0 V261.8 H445.0 V267.6 H445.6 V270.2 H447.5 V272.9 H449.0 V276.9 H450.5 V279.4 H450.7 V281.1 H452.0 V280.2 H453.5 V282.3 H454.0 V279.4 H454.9 V273.6 H456.5 V273.0 H458.5 V272.7 H459.1 V271.9 H460.0 V269.3 H460.7 V269.4 H462.4 V272.7 H463.0 V275.1 H464.5 V274.4 H466.0 V271.4 H467.4 V271.9 H468.5 V267.4 H469.1 V263.5 H470.0 V263.5 H471.5 V265.4 H471.6 V265.2 H474.2 V266.8 H474.5 V265.4 H476.7 V271.9 H477.5 V275.8 H479.0 V286.2 H479.2 V284.5 H482.0 V284.9 H484.0 V286.4 H484.2 V285.3 H485.1 V276.1 H486.7 V285.3 H487.0 V284.5 H489.3 V282.8 H490.0 V279.5 H492.0 V272.9 H492.6 V271.9 H494.5 V273.5 H496.0 V273.6 H497.0 V272.0 H499.0 V270.2 H499.3 V271.9 H501.5 V274.0 H502.7 V273.6 H503.5 V276.0 H504.4 V272.7 H505.0 V276.3 H506.0 V279.4 H507.0 V281.0 H509.4 V285.3 H509.5 V283.1 H511.0 V288.9 H511.9 V288.7 H512.5 V287.8 H514.4 V288.7 H515.0 V289.7 H517.5 V293.0 H517.8 V292.9 H519.5 V292.8 H521.1 V293.7 H521.5 V294.7 H522.8 V300.4 H523.0 V301.9 H524.5 V302.0 H525.0 V300.3 H526.5 V299.9 H528.5 V299.9 H529.2 V300.3 H530.5 V302.7 H531.7 V307.0 H533.0 V305.2 H534.2 V306.1 H534.5 V306.6 H536.5 V310.3 H536.7 V312.0 H539.5 V314.4 H540.1 V315.4 H541.8 V337.2 H542.5 V338.9 H544.3 V340.5 H544.5 V342.2 H546.5 V343.4 H546.8 V343.9 H549.3 V333.8 H549.5 V334.5 H551.9 V332.1 H552.5 V331.5 H554.0 V331.7 H555.5 V331.6 H556.9 V331.3 H558.5 V328.2 H559.4 V327.1 H561.0 V313.8 H561.1 V313.7 H562.5 V313.2 H564.4 V317.9 H564.5 V317.6 H567.0 V325.4 H567.0 V324.3 H570.0 V326.6 H571.1 V325.4 H571.5 V328.0 H572.8 V332.1 H574.5 V333.3 H576.0 V332.7 H576.2 V333.8 H577.9 V344.7 H579.0 V347.2 H580.5 V346.6 H581.2 V345.6 H583.5 V355.8 H583.7 V355.6 H586.5 V359.0 H588.5 V359.1 H588.8 V356.5 H591.0 V356.6 H592.5 V353.7 H593.0 V354.8 H594.0 V351.7 H594.6 V348.9 H596.3 V349.8 H596.5 V350.4 H597.1 V344.7 H598.0 V343.9 H600.5 V340.5 H600.5 V341.3 H602.2 V345.6 H603.5 V339.9 H603.9 V337.2 H605.0 V334.3 H605.5 V334.7 H607.0 V334.7 H608.0 V335.5 H608.9 V340.5 H609.0 V341.0 H611.0 V341.2 H611.4 V339.7 H612.2 V349.8 H614.0 V342.6 H614.8 V338.9 H616.0 V322.6 H616.4 V318.7 H619.0 V319.6 H619.0 V320.8 H621.5 V320.2 H623.5 V319.8 H625.0 V318.7 H625.7 V319.6 H626.5 V318.5 H628.2 V315.4 H629.0 V315.7 H630.5 V316.5 H632.4 V318.7 H633.5 V316.2 H635.7 V314.5 H636.5 V314.4 H639.0 V310.7 H639.1 V310.3 H640.8 V307.8 H642.0 V307.4 H643.3 V307.8 H643.5 V306.9 H645.0 V303.0 H645.8 V299.4 H647.5 V317.0 H648.0 V317.7 H650.5 V317.4 H652.5 V317.9 H653.0 V319.2 H655.5 V317.3 H658.0 V317.1 H659.2 V317.9 H659.5 V319.0 H660.1 V313.7 H661.5 V311.4 H663.4 V313.7 H664.0 V310.2 H664.3 V310.3 H666.5 V311.0 H667.6 V310.3 H668.5 V316.2 H668.5 V317.4 H670.5 V315.7 H671.0 V315.4 H672.6 V317.0 H673.0 V316.8 H675.0 V320.7 H676.0 V318.7 H676.9 V323.8 H678.0 V324.8 H679.5 V323.8 H681.0 V324.6 H682.5 V322.4 H685.0 V324.3 H686.1 V323.8 H687.0 V325.4 H689.0 V326.4 H689.4 V326.3 H692.0 V326.5 H692.8 V327.1 H694.5 V327.9 H696.1 V328.0 H696.5 V327.1 H698.7 V324.6 H699.0 V322.5 H700.0 V318.5 H701.5 V320.1 H703.4 V320.1 H704.5 V327.2 H705.0 V328.5 H707.5 V334.4 H707.5 V333.6 H709.2 V347.0 H710.0 V347.3 H711.7 V347.8 H712.0 V345.7 H713.5 V345.7 H716.0 V348.5 H717.6 V348.7 H718.5 V354.0 H719.3 V357.0 H720.5 V357.1 H722.0 V353.0 H722.6 V353.7 H723.5 V355.0 H724.3 V355.4 H725.5 V357.5 H726.9 V362.1 H727.5 V362.7 H729.0 V362.9 H730.2 V362.1 H731.9 V343.6 H732.0 V343.9 H734.4 V341.1 H735.0 V339.5 H736.9 V329.4 H737.0 V329.1 H739.0 V331.4 H740.3 V336.1 H740.5 V334.2 H742.0 V324.3 H742.5 V324.8 H745.5 V325.4 H748.0 V327.3 H748.7 V324.3 H750.3 V332.7 H751.0 V330.8 H752.0 V327.7 H752.5 V325.1 H754.5 V321.1 H754.5 V321.0 H756.5 V319.9 H757.0 V321.8 H758.5 V327.7 H758.7 V326.8 H760.4 V327.7 H761.5 V337.4 H762.1 V341.9 H763.5 V339.5 H765.4 V341.9 H765.5 V343.8 H767.1 V333.6 H767.5 V336.2 H770.5 V329.4 H770.5 V332.8 H772.1 V343.6 H773.0 V343.7 H775.5 V342.6 H777.0 V343.9 H777.2 V344.5 H778.9 V363.8 H779.5 V364.8 H780.5 V363.8 H782.2 V357.0 H782.5 V356.7 H784.5 V355.7 H786.5 V356.5 H787.2 V357.0 H788.0 V355.3 H789.5 V356.7 H790.6 V358.7 H791.0 V361.0 H793.5 V361.1 H795.6 V358.7 H796.5 V354.5 H797.3 V350.3 H799.0 V349.2 H800.5 V349.3 H800.7 V350.3 H803.0 V354.6 H803.2 V353.7 H805.0 V361.6 H805.7 V365.4 H807.0 V363.2 H807.4 V363.8 H809.5 V369.8 H809.9 V370.5 H812.0 V363.8 H812.4 V363.8 H814.0 V364.2 H815.8 V363.8 H817.0 V370.5 H817.5 V372.1 H820.0 V371.2 H822.5 V372.1 H822.5 V372.5 H824.5 V364.8 H825.8 V359.6 H826.5 V367.4 H827.5 V377.2 H829.0 V373.5 H830.5 V371.6 H830.9 V370.5 H833.5 V373.0 H834.2 V373.8 H836.5 V377.1 H837.6 V378.9 H839.0 V374.0 H840.1 V370.5 H841.5 V365.2 H842.6 V360.4 H844.0 V368.1 H844.3 V370.5 H846.5 V373.1 H847.6 V373.8 H849.5 V375.9 H851.0 V377.2 H851.5 V379.4 H854.4 V382.2 H854.5 V384.1 H856.0 V376.3 H856.9 V369.6 H859.0 V369.2 H860.2 V369.6 H860.5 V370.9 H862.0 V378.3 H862.8 V382.2 H865.0 V381.3 H866.1 V382.2 H867.5 V374.4 H867.8 V372.1 H870.5 V371.0 H871.1 V372.1 H872.0 V371.6 H873.5 V371.8 H874.5 V373.8 H875.0 V374.2 H875.5 V374.6 H877.5 V373.7 H878.0 V370.1 H879.5 V377.6 H880.0 V376.2 H882.0 V380.2 H882.5 V377.9 H884.1 V366.1 H884.5 V367.2 H887.0 V365.6 H888.1 V364.1 H888.5 V362.6 H889.1 V358.1 H891.5 V358.8 H894.5 V359.7 H897.1 V358.1 H897.5 V357.3 H899.0 V355.2 H899.2 V354.0 H900.5 V354.8 H903.0 V355.6 H905.2 V355.0 H906.0 V358.0 H907.2 V359.1 H907.5 V360.0 H909.5 V362.9 H910.2 V362.1 H911.0 V362.5 H912.2 V365.1 H914.0 V365.4 H915.3 V366.1 H916.3 V372.1 H917.0 V372.1 H920.0 V372.9 H921.3 V375.2 H923.0 V380.3 H924.3 V383.2 H924.5 V384.8 H927.0 V389.1 H927.4 V388.3 H929.4 V396.3 H930.0 V394.8 H932.5 V393.1 H933.4 V394.3 H934.0 V394.9 H936.0 V393.8 H938.0 V395.1 H941.0 V393.9 H943.0 V394.1 H946.0 V393.9 H947.5 V393.3 H947.5 V392.7 H949.5 V404.4 H950.5 V406.2 H952.5 V409.4 H952.5 V409.0 H955.0 V422.2 H955.5 V426.5 H958.0 V422.2 H958.5 V420.5 H959.5 V422.0 H962.5 V420.8 H963.6 V420.5 H964.5 V419.2 H966.5 V419.7 H968.5 V419.6 H968.6 V418.5 H969.6 V410.4 H970.5 V411.9 H973.0 V417.2 H973.6 V419.5 H974.5 V418.0 H975.7 V415.4 H977.5 V419.7 H977.7 V420.5 H979.0 V423.4 H979.7 V425.5 H981.0 V425.6 H982.5 V426.7 H984.5 V427.2 H985.7 V426.5 H986.5 V428.6 H987.7 V430.5 H989.0 V432.3 H991.0 V435.1 H991.8 V432.5 H994.0 V438.7 H994.8 V441.6 H997.0 V431.8 H997.8 V427.5 H999.5 V427.4 H1002.5 V428.3 H1005.0 V426.6 H1006.5 V427.6 H1007.9 V427.5 H1008.5 V425.9 H1010.5 V424.8 H1012.5 V424.6 H1013.9 V425.5 H1014.0 V425.9 H1017.0 V409.7 H1017.9 V406.4 H1019.0 V404.8 H1020.5 V397.2 H1022.0 V391.3 H1022.0 V390.9 H1025.0 V392.3 H1025.0 V393.3 H1028.0 V393.3 H1028.0 V393.8 H1030.0 V396.7 H1031.0 V399.3 H1031.5 V400.7 H1034.0 V404.4 H1034.5 V403.9 H1036.5 V405.2 H1038.1 V401.3 H1038.5 V404.5 H1039.1 V408.4 H1041.5 V404.7 H1042.1 V404.4 H1043.5 V404.7 H1045.0 V406.6 H1045.1 V407.4 H1047.5 V405.4 H1049.0 V405.6 H1051.5 V406.1 H1052.2 V408.4 H1053.5 V413.0 H1055.0 V418.1 H1055.2 V420.5" fill="none" stroke="#4568d8" stroke-width="1.4" stroke-linejoin="miter"/>
<path d="M30.5,242.5 H33.5 V241.1 H34.7 V241.7 H35.5 V239.5 H37.0 V241.7 H38.5 V243.5 H39.7 V242.5 H40.6 V248.4 H41.5 V249.6 H43.1 V253.4 H44.5 V255.8 H45.6 V255.9 H47.0 V259.2 H47.3 V260.1 H48.5 V261.6 H49.0 V261.8 H51.5 V261.0 H51.5 V260.4 H52.3 V255.1 H53.0 V254.9 H54.9 V250.9 H55.0 V249.9 H56.5 V247.6 H57.0 V246.2 H57.4 V244.2 H58.5 V245.0 H60.0 V243.6 H60.7 V242.5 H62.0 V241.6 H63.5 V243.7 H64.1 V245.0 H65.5 V243.7 H65.8 V245.0 H66.6 V253.4 H68.0 V259.4 H68.3 V260.1 H69.1 V265.2 H70.0 V267.2 H70.8 V271.9 H72.5 V273.6 H73.0 V273.5 H75.0 V271.0 H75.8 V276.1 H76.0 V276.5 H76.7 V283.6 H78.0 V288.1 H78.3 V287.8 H80.0 V289.9 H81.5 V289.7 H81.7 V288.7 H84.0 V290.8 H85.0 V290.3 H86.0 V293.5 H86.7 V297.9 H88.0 V298.2 H88.4 V297.0 H89.2 V283.6 H91.0 V283.9 H91.8 V282.8 H93.5 V284.8 H94.3 V285.3 H96.0 V280.3 H96.0 V283.0 H97.6 V286.1 H98.0 V287.4 H100.2 V282.8 H101.0 V277.7 H101.8 V272.7 H103.0 V270.2 H104.3 V271.0 H105.5 V271.2 H106.9 V272.7 H107.0 V270.8 H109.4 V271.0 H110.0 V272.8 H111.0 V277.8 H112.0 V278.3 H113.6 V280.3 H114.0 V280.2 H116.1 V282.8 H117.0 V281.4 H119.4 V282.8 H119.5 V282.9 H121.0 V286.0 H122.0 V286.1 H124.0 V286.1 H124.5 V287.8 H126.2 V290.3 H126.5 V293.3 H127.0 V295.4 H128.0 V293.7 H128.7 V288.7 H129.5 V286.7 H131.2 V287.0 H132.0 V281.4 H132.9 V278.6 H135.0 V277.6 H135.4 V276.1 H136.5 V276.9 H138.0 V275.7 H138.7 V273.6 H140.1 V288.7 H141.0 V291.5 H143.5 V291.6 H143.8 V289.5 H145.0 V293.0 H148.0 V288.8 H148.8 V290.3 H151.0 V289.6 H153.8 V291.2 H154.0 V292.4 H157.0 V294.3 H157.2 V293.7 H158.9 V287.8 H159.5 V287.1 H160.6 V290.3 H161.0 V293.0 H162.2 V297.9 H163.0 V299.9 H163.1 V299.6 H164.7 V311.3 H166.0 V308.3 H167.5 V308.9 H168.1 V312.1 H170.0 V310.0 H172.3 V312.1 H172.5 V313.4 H174.0 V314.7 H174.0 V315.2 H174.8 V328.9 H176.0 V322.5 H176.5 V322.2 H177.3 V314.7 H178.0 V312.9 H180.0 V313.1 H180.7 V314.7 H182.0 V310.2 H183.2 V313.0 H185.0 V313.0 H185.7 V311.3 H187.0 V312.1 H188.5 V307.9 H189.1 V302.9 H191.5 V303.7 H193.0 V304.9 H193.3 V303.8 H194.9 V297.9 H196.0 V295.5 H197.5 V290.3 H199.0 V287.9 H200.0 V285.3 H201.5 V282.6 H202.5 V280.3 H203.0 V281.6 H205.0 V281.7 H205.0 V281.1 H206.5 V290.2 H207.5 V295.1 H209.0 V297.9 H210.9 V296.8 H211.5 V295.4 H213.4 V294.3 H213.5 V297.0 H214.2 V303.5 H215.0 V309.3 H215.9 V310.2 H217.6 V321.9 H218.0 V320.9 H220.1 V319.4 H220.5 V320.1 H223.5 V320.3 H223.5 V320.7 H225.1 V321.1 H225.5 V324.5 H226.8 V335.4 H227.5 V334.2 H230.0 V332.8 H230.2 V333.7 H232.5 V332.3 H233.5 V332.0 H234.0 V334.3 H236.0 V336.2 H237.0 V338.3 H238.6 V340.4 H239.5 V347.9 H240.2 V347.1 H241.5 V347.7 H242.8 V346.3 H244.0 V346.5 H245.3 V345.4 H245.5 V342.5 H246.9 V339.6 H247.0 V340.0 H249.5 V342.1 H250.0 V341.5 H251.1 V345.4 H252.0 V342.8 H252.8 V348.0 H255.0 V353.2 H255.3 V351.3 H258.0 V350.6 H258.7 V350.5 H260.5 V351.3 H261.2 V353.8 H263.0 V355.9 H263.7 V358.9 H265.4 V368.9 H265.5 V368.2 H268.5 V368.5 H268.8 V367.2 H271.0 V365.4 H271.3 V363.9 H273.5 V353.0 H273.8 V353.8 H275.0 V350.9 H275.5 V349.6 H278.0 V352.1 H278.0 V352.5 H279.7 V365.6 H281.0 V366.8 H281.3 V367.2 H283.0 V357.2 H283.5 V358.3 H285.5 V353.8 H286.5 V354.8 H288.5 V351.4 H288.9 V350.5 H290.5 V347.3 H290.6 V344.6 H293.5 V343.6 H293.9 V343.8 H296.4 V346.3 H296.5 V344.2 H298.0 V344.4 H299.0 V343.8 H299.5 V342.8 H301.5 V344.6 H302.5 V345.1 H304.0 V344.6 H304.0 V345.2 H305.7 V332.0 H306.5 V329.7 H307.4 V323.6 H308.5 V325.4 H309.9 V326.1 H310.5 V322.7 H311.5 V315.2 H313.2 V323.6 H313.5 V324.2 H314.9 V327.0 H316.5 V320.3 H316.6 V321.9 H318.0 V320.5 H319.1 V320.3 H320.5 V320.4 H322.0 V320.4 H322.4 V321.1 H323.5 V324.1 H325.0 V322.0 H327.0 V321.1 H327.5 V323.6 H329.0 V322.0 H330.0 V323.6 H331.5 V317.1 H332.5 V311.0 H333.0 V311.6 H335.5 V312.4 H335.9 V310.2 H337.5 V306.9 H339.2 V306.0 H340.0 V305.5 H342.6 V303.5 H343.0 V305.0 H344.5 V302.8 H345.9 V303.5 H347.0 V305.3 H348.5 V306.8 H349.3 V301.0 H350.0 V308.8 H350.0 V311.9 H353.0 V310.7 H353.4 V308.8 H354.2 V285.3 H355.5 V279.7 H356.7 V275.2 H357.5 V275.4 H360.1 V276.9 H360.5 V278.3 H362.6 V283.6 H363.5 V276.6 H365.1 V273.6 H365.5 V271.1 H368.0 V272.5 H369.3 V271.9 H369.5 V271.3 H371.0 V278.6 H372.0 V280.7 H373.5 V276.1 H374.5 V275.4 H377.0 V274.7 H378.5 V274.2 H379.4 V276.1 H381.0 V266.8 H381.5 V268.7 H383.6 V264.3 H384.5 V267.0 H386.1 V266.8 H386.9 V271.9 H387.5 V269.3 H389.0 V271.5 H391.1 V274.4 H391.5 V273.6 H392.8 V269.4 H394.5 V276.9 H394.5 V276.9 H396.0 V277.0 H397.8 V276.9 H398.0 V277.2 H400.0 V279.3 H401.2 V280.3 H401.5 V281.0 H403.5 V275.4 H403.7 V278.6 H405.4 V287.0 H406.0 V288.3 H407.1 V293.7 H408.5 V284.7 H408.7 V281.9 H411.0 V282.7 H411.2 V278.6 H412.1 V273.6 H414.0 V272.2 H416.5 V273.7 H417.1 V272.7 H418.5 V274.6 H420.0 V270.6 H420.5 V273.6 H421.5 V271.9 H423.0 V271.9 H423.8 V275.2 H425.5 V271.7 H427.2 V276.1 H428.5 V273.8 H430.5 V275.2 H431.0 V274.2 H433.0 V275.0 H433.9 V276.9 H436.0 V272.8 H436.4 V273.6 H438.1 V264.3 H438.5 V265.6 H440.6 V262.7 H441.0 V261.2 H442.3 V256.8 H443.5 V257.1 H444.8 V265.2 H445.0 V265.7 H446.5 V272.7 H448.0 V276.0 H449.0 V275.2 H449.5 V278.8 H450.7 V281.9 H452.0 V282.6 H454.0 V281.1 H454.5 V279.4 H455.7 V276.1 H456.5 V275.3 H459.1 V274.4 H459.5 V273.9 H462.0 V276.3 H462.4 V276.1 H464.5 V279.0 H465.8 V278.6 H467.5 V278.0 H469.1 V276.9 H470.0 V273.5 H470.8 V271.0 H471.5 V273.3 H472.5 V276.1 H473.5 V277.8 H475.8 V278.6 H476.5 V282.5 H478.4 V292.0 H478.5 V292.2 H481.5 V288.8 H482.6 V290.3 H483.0 V286.3 H485.5 V288.5 H485.9 V290.3 H488.0 V287.3 H489.3 V286.1 H490.9 V278.6 H491.0 V277.8 H492.5 V279.8 H494.3 V280.3 H495.0 V280.0 H497.5 V284.3 H497.6 V282.8 H499.0 V282.8 H501.0 V281.9 H501.5 V283.7 H503.0 V282.8 H504.4 V285.3 H504.5 V284.4 H506.9 V292.0 H507.5 V292.8 H509.5 V297.1 H510.2 V297.0 H511.1 V304.6 H512.0 V298.1 H512.8 V297.0 H514.5 V294.1 H516.0 V296.6 H516.1 V298.7 H518.5 V299.8 H519.5 V302.1 H521.0 V308.1 H522.5 V310.4 H522.8 V310.5 H525.0 V307.8 H525.0 V306.9 H526.5 V303.3 H526.7 V303.6 H529.0 V303.1 H529.2 V301.9 H530.9 V298.6 H531.5 V302.9 H532.5 V305.3 H533.5 V308.0 H535.1 V305.3 H535.5 V309.5 H537.6 V309.5 H538.5 V311.2 H540.1 V312.0 H540.9 V315.4 H541.0 V317.8 H541.8 V333.8 H544.0 V335.9 H545.1 V337.2 H546.0 V340.8 H546.8 V342.2 H547.6 V338.9 H548.0 V337.6 H549.3 V332.1 H550.5 V329.3 H551.9 V327.1 H552.5 V329.4 H555.2 V325.4 H555.5 V324.3 H558.0 V323.7 H558.6 V320.4 H559.5 V317.6 H560.2 V315.4 H561.1 V307.0 H561.5 V309.2 H562.8 V310.3 H564.0 V311.4 H565.3 V312.0 H567.0 V317.0 H567.0 V316.3 H569.0 V313.4 H570.3 V316.2 H571.5 V317.1 H572.8 V317.0 H573.5 V324.6 H573.7 V325.4 H576.5 V327.7 H577.0 V327.1 H578.7 V333.8 H579.0 V330.6 H580.4 V335.5 H581.5 V339.8 H582.9 V345.6 H583.5 V344.1 H585.4 V343.9 H586.0 V342.0 H588.0 V338.7 H588.8 V343.1 H589.5 V346.3 H592.1 V345.6 H592.5 V347.7 H593.8 V342.2 H595.5 V341.0 H596.3 V335.5 H598.0 V335.0 H598.8 V334.7 H599.5 V333.2 H601.3 V332.1 H601.5 V330.3 H603.0 V329.8 H603.9 V328.8 H604.5 V327.9 H605.5 V330.5 H606.0 V330.9 H608.0 V327.1 H608.5 V330.4 H609.7 V337.2 H610.5 V336.7 H611.4 V335.5 H612.2 V347.2 H613.5 V341.4 H613.9 V340.5 H615.5 V321.4 H615.6 V320.4 H617.3 V318.7 H618.0 V318.9 H620.0 V317.1 H620.6 V317.0 H622.5 V319.7 H624.0 V317.9 H625.5 V316.1 H625.7 V313.7 H627.0 V315.7 H628.2 V315.4 H629.0 V318.1 H629.9 V318.7 H631.0 V318.7 H632.4 V315.4 H632.5 V315.9 H635.5 V310.5 H635.7 V312.0 H637.5 V312.0 H639.1 V313.7 H639.5 V316.0 H641.0 V315.5 H642.5 V309.5 H642.5 V310.8 H645.0 V307.0 H645.5 V302.1 H645.8 V300.3 H647.5 V317.0 H648.0 V316.1 H650.8 V318.7 H651.0 V318.6 H653.0 V320.6 H654.2 V322.9 H654.5 V325.7 H657.5 V326.2 H657.5 V323.8 H659.0 V320.5 H659.2 V318.7 H662.0 V316.4 H663.5 V314.9 H664.3 V315.4 H666.5 V319.1 H667.6 V315.4 H669.3 V320.4 H669.5 V321.9 H672.0 V321.5 H672.6 V322.1 H674.0 V321.3 H676.0 V328.8 H677.0 V324.6 H679.4 V328.0 H680.0 V328.4 H682.0 V326.4 H682.7 V325.4 H685.0 V319.8 H686.1 V322.1 H687.5 V321.4 H688.6 V318.7 H689.5 V321.5 H690.3 V326.3 H691.0 V325.9 H692.8 V327.1 H693.5 V326.4 H695.5 V327.8 H696.1 V330.5 H697.0 V324.4 H697.8 V322.1 H699.5 V314.5 H699.5 V313.9 H700.0 V318.5 H701.5 V315.7 H703.0 V311.5 H703.4 V311.7 H704.5 V317.1 H705.0 V325.2 H707.5 V330.1 H707.5 V330.2 H709.2 V343.6 H710.0 V343.6 H711.5 V346.2 H711.7 V345.3 H714.0 V346.7 H715.5 V346.4 H716.8 V344.5 H718.5 V350.2 H719.3 V353.7 H721.0 V343.6 H721.5 V343.4 H723.5 V348.7 H724.0 V350.0 H725.5 V351.9 H726.9 V352.0 H728.0 V360.1 H728.5 V357.9 H730.2 V348.7 H730.5 V348.9 H732.5 V337.8 H732.7 V337.8 H735.2 V340.3 H735.5 V338.8 H736.9 V328.5 H738.5 V327.2 H740.3 V333.6 H740.5 V331.7 H742.0 V325.2 H742.5 V323.1 H744.0 V322.1 H746.0 V326.2 H747.0 V326.8 H749.0 V328.1 H749.5 V330.2 H751.0 V340.4 H751.2 V340.3 H752.9 V330.2 H753.0 V328.3 H755.4 V328.5 H755.5 V329.4 H757.9 V333.6 H758.5 V335.4 H760.0 V344.2 H760.4 V341.9 H761.2 V353.7 H763.0 V354.9 H764.5 V355.4 H765.4 V355.4 H767.0 V359.9 H767.1 V358.7 H768.8 V343.6 H769.5 V341.4 H770.5 V340.3 H771.0 V348.4 H772.1 V357.0 H773.0 V359.1 H776.0 V364.4 H777.2 V363.8 H778.9 V378.9 H779.0 V381.5 H782.0 V374.0 H782.2 V372.1 H785.0 V374.0 H785.6 V373.8 H787.0 V376.3 H788.5 V380.4 H790.6 V377.2 H791.5 V373.1 H794.0 V372.1 H794.0 V372.8 H795.5 V367.9 H797.3 V363.8 H798.5 V363.7 H799.8 V363.8 H800.5 V363.9 H802.4 V370.5 H803.0 V371.5 H804.5 V375.8 H804.9 V375.5 H807.4 V380.5 H807.5 V382.1 H810.5 V378.5 H810.7 V375.5 H812.5 V376.2 H814.0 V377.5 H814.1 V378.9 H815.5 V382.5 H816.6 V385.6 H818.5 V386.9 H820.8 V387.2 H821.0 V388.0 H822.5 V385.3 H824.2 V383.9 H825.0 V375.5 H825.8 V370.5 H826.5 V377.4 H827.5 V383.9 H829.5 V392.3 H830.0 V392.3 H831.5 V387.3 H832.5 V385.6 H834.0 V388.5 H836.5 V391.7 H837.6 V392.3 H838.5 V390.9 H840.5 V381.4 H840.9 V377.2 H842.0 V373.3 H842.6 V370.5 H844.5 V377.3 H846.0 V383.9 H847.5 V387.9 H850.5 V389.3 H851.0 V388.9 H852.0 V391.2 H853.5 V394.0 H856.0 V383.4 H856.0 V383.9 H858.0 V381.8 H858.6 V382.2 H860.0 V389.8 H861.1 V394.0 H861.5 V393.5 H863.0 V394.6 H864.4 V395.6 H864.5 V394.7 H867.5 V384.6 H867.8 V385.6 H869.0 V386.7 H871.1 V383.9 H871.5 V383.1 H873.0 V384.3 H875.0 V384.2 H876.0 V382.1 H878.0 V382.2 H879.0 V392.3 H880.5 V384.5 H881.0 V384.2 H882.0 V385.7 H883.0 V386.2 H884.1 V376.2 H884.5 V374.3 H887.0 V371.3 H887.1 V372.1 H889.5 V369.5 H890.1 V368.1 H891.0 V370.6 H893.0 V370.1 H893.1 V370.1 H894.5 V366.5 H896.5 V364.4 H897.1 V366.1 H899.0 V363.9 H900.2 V361.1 H902.0 V364.4 H903.2 V364.1 H904.0 V365.3 H906.2 V367.1 H907.0 V369.3 H908.2 V370.1 H908.5 V368.8 H910.0 V364.3 H910.2 V366.1 H912.2 V371.1 H912.5 V373.4 H914.3 V380.2 H915.5 V386.8 H916.3 V389.3 H917.5 V391.5 H919.3 V390.3 H920.5 V392.0 H922.3 V393.3 H923.0 V396.3 H925.3 V401.3 H926.0 V405.0 H927.5 V410.6 H928.4 V412.4 H930.5 V412.8 H932.4 V410.4 H932.5 V410.6 H934.4 V406.4 H935.5 V405.1 H937.4 V404.4 H938.0 V408.1 H941.0 V407.7 H943.5 V405.4 H944.0 V406.1 H945.5 V404.9 H947.5 V408.4 H948.5 V411.6 H949.5 V416.4 H951.5 V428.5 H951.5 V426.7 H954.5 V434.6 H956.5 V444.4 H957.5 V448.7 H958.5 V444.9 H959.6 V442.6 H960.5 V443.4 H963.0 V442.4 H963.6 V441.6 H966.0 V439.4 H967.5 V438.2 H967.6 V440.6 H969.6 V434.6 H970.5 V438.9 H971.6 V444.6 H973.5 V444.7 H975.0 V443.7 H975.7 V445.6 H977.0 V447.5 H979.0 V451.2 H979.7 V454.7 H981.5 V453.9 H983.7 V455.7 H984.5 V455.4 H987.0 V456.3 H987.7 V458.7 H990.0 V462.4 H990.8 V461.7 H991.5 V465.9 H993.5 V469.3 H993.8 V466.8 H996.5 V456.0 H996.8 V454.7 H999.0 V450.9 H1000.5 V449.8 H1000.8 V450.7 H1002.5 V450.2 H1003.9 V447.6 H1004.5 V450.1 H1007.5 V448.4 H1009.9 V448.7 H1010.5 V447.5 H1012.5 V448.7 H1013.9 V444.6 H1014.0 V442.2 H1016.5 V430.7 H1017.9 V426.5 H1019.0 V422.6 H1021.0 V416.4 H1021.5 V415.0 H1024.0 V415.4 H1024.5 V415.6 H1027.0 V416.9 H1028.0 V418.5 H1028.5 V418.6 H1030.0 V415.8 H1031.0 V416.4 H1032.5 V422.4 H1034.0 V428.5 H1034.5 V428.3 H1037.5 V424.3 H1038.1 V421.5 H1039.5 V422.7 H1041.1 V426.5 H1041.5 V427.6 H1043.0 V427.8 H1044.1 V428.5 H1045.0 V426.5 H1047.5 V424.1 H1048.1 V424.5 H1049.5 V423.5 H1052.0 V423.7 H1052.2 V425.5 H1055.0 V439.9 H1055.2 V440.6" fill="none" stroke="#609536" stroke-width="1.5" stroke-linejoin="miter"/>
<line x1="30.5" y1="243" x2="1055.5" y2="243" stroke="#000" stroke-width="2.1"/>
</svg>
<div class="a t" style="top:503.44px;font-size:12px;color:#222;left:111.50px;width:100px;text-align:center;">500</div>
<div class="a t" style="top:503.44px;font-size:12px;color:#222;left:244.90px;width:100px;text-align:center;">1 000</div>
<div class="a t" style="top:503.44px;font-size:12px;color:#222;left:378.30px;width:100px;text-align:center;">1 500</div>
<div class="a t" style="top:503.44px;font-size:12px;color:#222;left:511.70px;width:100px;text-align:center;">2 000</div>
<div class="a t" style="top:503.44px;font-size:12px;color:#222;left:645.10px;width:100px;text-align:center;">2 500</div>
<div class="a t" style="top:503.44px;font-size:12px;color:#222;left:778.50px;width:100px;text-align:center;">3 000</div>
<div class="a t" style="top:503.44px;font-size:12px;color:#222;left:911.90px;width:100px;text-align:center;">3 500</div>
<div class="a t" style="top:525.35px;font-size:11.4px;color:#111;font-weight:bold;left:493.20px;width:100px;text-align:center;">Hands</div>
<div class="a t" style="top:206.13px;font-size:11.3px;color:#222;left:1066.80px;">$2 000,00</div>
<div class="a t" style="top:237.10px;font-size:11.3px;color:#222;left:1066.80px;">$0,00</div>
<div class="a t" style="top:268.07px;font-size:11.3px;color:#222;left:1066.80px;">-$2 000,00</div>
<div class="a t" style="top:299.04px;font-size:11.3px;color:#222;left:1066.80px;">-$4 000,00</div>
<div class="a t" style="top:330.01px;font-size:11.3px;color:#222;left:1066.80px;">-$6 000,00</div>
<div class="a t" style="top:360.98px;font-size:11.3px;color:#222;left:1066.80px;">-$8 000,00</div>
<div class="a t" style="top:391.95px;font-size:11.3px;color:#222;left:1066.80px;">-$10 000,00</div>
<div class="a t" style="top:422.92px;font-size:11.3px;color:#222;left:1066.80px;">-$12 000,00</div>
<div class="a t" style="top:453.89px;font-size:11.3px;color:#222;left:1066.80px;">-$14 000,00</div>
<div class="a t" style="left:1110px;top:336px;width:60px;text-align:center;font-size:12px;font-weight:bold;color:#111;transform:rotate(-90deg)">Winnings</div>

<div class="a" style="left:14.5px;top:561.5px;width:68.5px;height:24.5px;border:1px solid #9c9c9c;border-bottom:none;background:linear-gradient(#e4e4e4,#d0d0d0)"></div>
<div class="a" style="left:15.5px;top:562.5px;width:20px;height:23.5px;background:linear-gradient(#eeedf4,#cac8de);border-right:1px solid #c9c9c9"></div>
<div class="a" style="left:21px;top:571px;width:0;height:0;border-left:4.5px solid transparent;border-right:4.5px solid transparent;border-bottom:4px solid #555"></div>
<div class="a t " style="left:40.50px;top:568.37px;font-size:10.9px;color:#111;">Options</div>
<div class="a" style="left:419px;top:568.8px;width:6px;height:6px;background:#6b9b3a"></div>
<div class="a t " style="left:430.30px;top:567.51px;font-size:11.8px;color:#222;">Net Won</div>
<div class="a" style="left:485.3px;top:568.8px;width:6px;height:6px;background:#e0141e"></div>
<div class="a t " style="left:496.80px;top:567.51px;font-size:11.8px;color:#222;">Non Showdown</div>
<div class="a" style="left:590.8px;top:568.8px;width:6px;height:6px;background:#3d6fe0"></div>
<div class="a t " style="left:600.00px;top:567.51px;font-size:11.8px;color:#222;">Showdown</div>
<div class="a" style="left:666.5px;top:568.8px;width:6px;height:6px;background:#f0a040"></div>
<div class="a t " style="left:677.50px;top:567.51px;font-size:11.8px;color:#222;">All-In EV</div>
<div class="a t " style="left:1076.30px;top:556.30px;font-size:9.1px;color:#a8a8a8;">Powered by</div>
<div class="a t " style="left:1029.10px;top:567.16px;font-size:12.1px;color:#444;">Hold'em Manager</div>
<svg class="a" style="left:1129.5px;top:558.2px" width="21.2" height="22.4" viewBox="0 0 21.2 22.4"><polygon points="10.6,0 21.2,5.6 21.2,16.8 10.6,22.4 0,16.8 0,5.6" fill="#ec8246"/><text x="10.6" y="17" text-anchor="middle" font-family="Liberation Sans" font-weight="bold" font-size="15" fill="#fff">2</text></svg>
</body></html>
